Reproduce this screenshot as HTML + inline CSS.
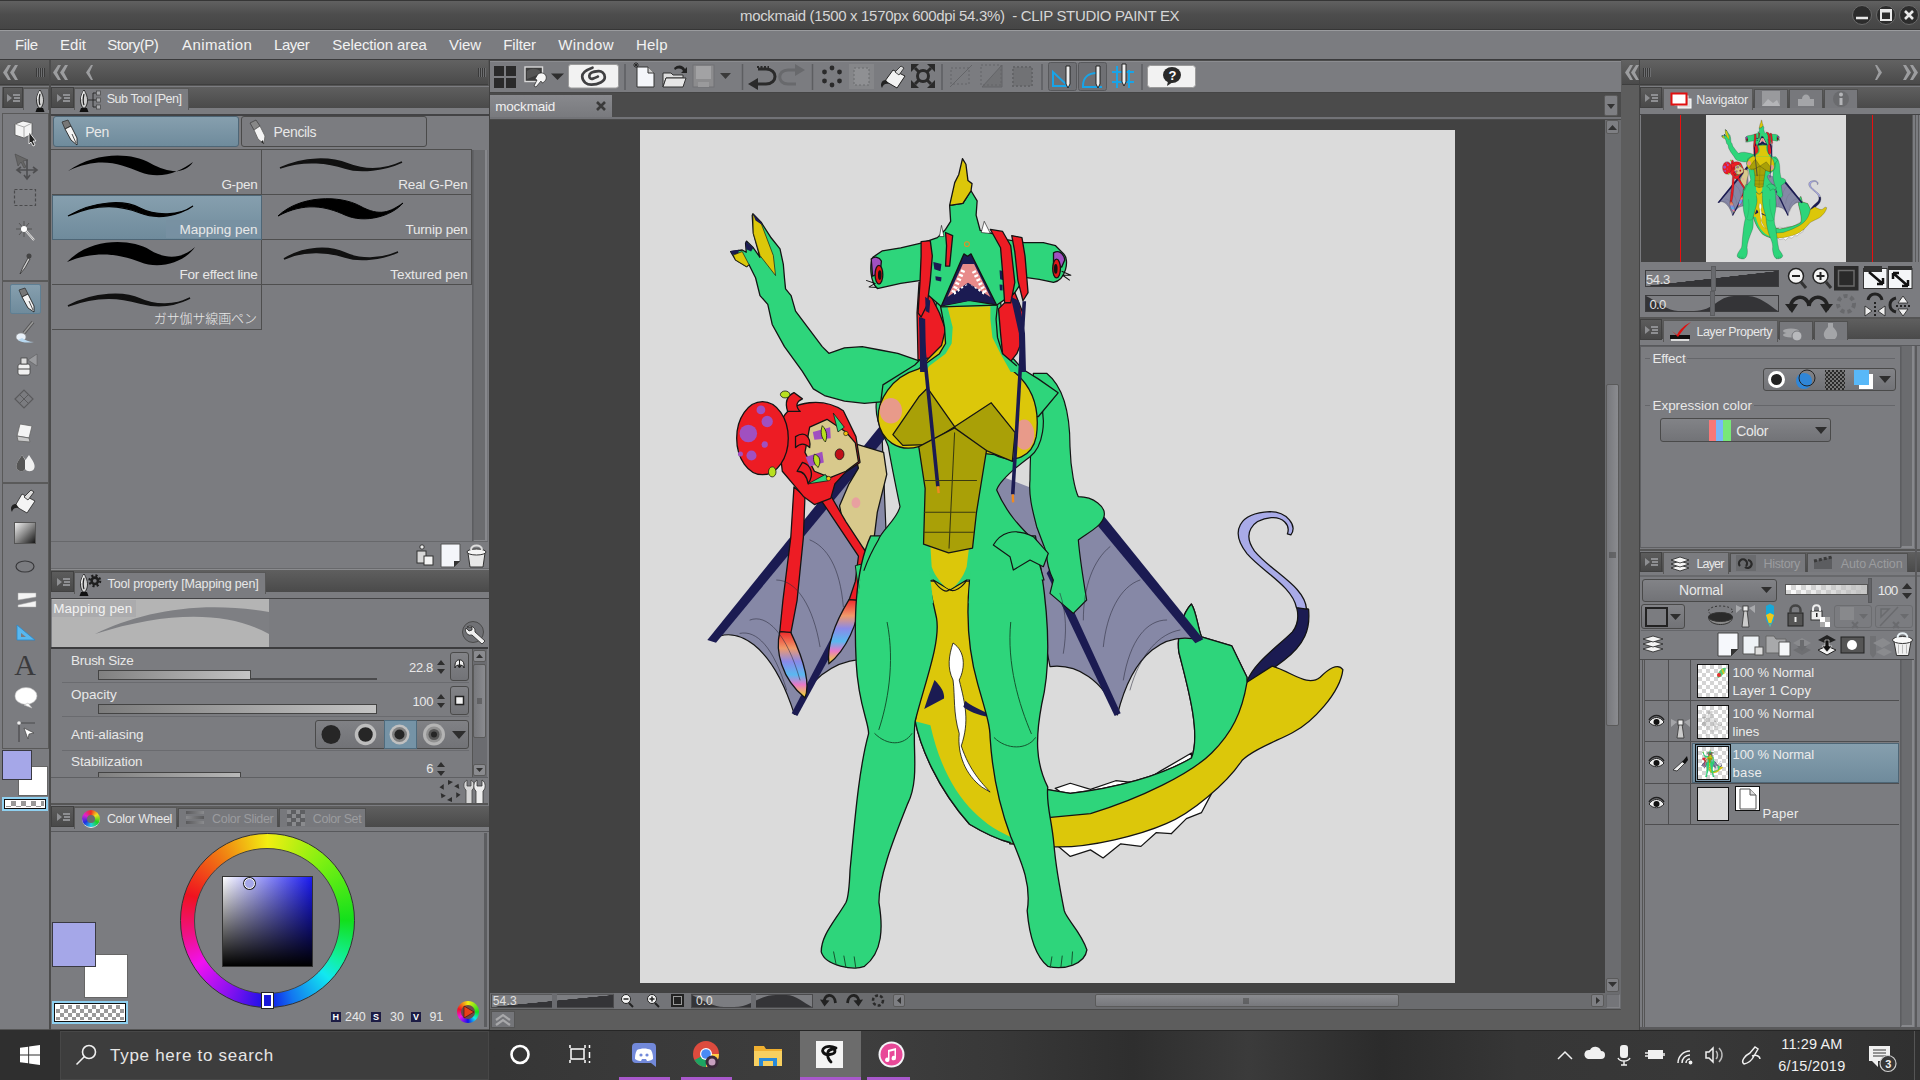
<!DOCTYPE html>
<html lang="en"><head><meta charset="utf-8"><title>mockmaid - CLIP STUDIO PAINT EX</title>
<style>
*{box-sizing:border-box;margin:0;padding:0}
html,body{width:1920px;height:1080px;overflow:hidden;background:#505050;font-family:"Liberation Sans","Noto Sans CJK JP",sans-serif;}
#root{position:relative;width:1920px;height:1080px;overflow:hidden;background:#555555}
.a{position:absolute}
.t{position:absolute;white-space:nowrap;color:#e8e8e8;line-height:1;font-size:13px}
.pan{position:absolute;background:#7b7c80}
.dk{position:absolute;background:linear-gradient(#626262,#4a4a4a)}
.tabbar{position:absolute;background:linear-gradient(#5f5f5f,#4a4a4a)}
.tab{position:absolute;background:#7b7c80;border:1px solid #585858;border-bottom:none}
.tabi{position:absolute;background:#77787c;border:1px solid #505050;border-bottom:none}
.mb{position:absolute;background:linear-gradient(#5c5c5c,#494949);border:1px solid #414141}
svg{position:absolute;overflow:visible}
.cell{position:absolute;border-right:1px solid #4e4e4e;border-bottom:1px solid #4e4e4e}
.sel{background:linear-gradient(#869fae,#6f8b9c)}
.btn{position:absolute;border:1px solid #4a4a4a;border-radius:3px;background:linear-gradient(#828387,#727377)}
</style></head><body><div id="root">
<!-- TITLE BAR -->
<div class="a" style="left:0;top:0;width:1920px;height:30px;background:linear-gradient(#616161,#4c4c4c 50%,#454545);border-top:1px solid #363636;border-bottom:1px solid #363636"></div>
<!-- MENU BAR -->
<div class="a" style="left:0;top:30px;width:1920px;height:30px;background:#7b7c80;border-top:1px solid #9a9b9e;border-bottom:1px solid #3a3a3c"></div>
<style>.m{top:37px;font-size:15px;color:#f0f0f0}</style>
<svg width="0" height="0" style="position:absolute"><defs>
<pattern id="chk" width="4" height="4" patternUnits="userSpaceOnUse"><rect width="2" height="2" fill="#777"/><rect x="2" y="2" width="2" height="2" fill="#777"/></pattern>
<linearGradient id="rb" x1="0" y1="0" x2="0" y2="1"><stop offset="0" stop-color="#ee2a2a"/><stop offset=".25" stop-color="#f09a6a"/><stop offset=".45" stop-color="#8a8ae8"/><stop offset=".65" stop-color="#5ab8f0"/><stop offset=".8" stop-color="#e878c8"/><stop offset="1" stop-color="#f0e020"/></linearGradient>
<g id="art" stroke="#141414" stroke-linejoin="round">
<!-- tail -->
<g transform="translate(1040 440) scale(.5048)" stroke-width="2.500">
<path d="M410 478 C425 440,470 410,500 380 C512 365,512 345,508 330 L532 335 C536 375,524 405,484 436 L444 466 L415 488Z" fill="#1b1b52"/>
<path d="M508 332 C500 290,440 260,410 225 C375 180,395 145,455 142 C490 142,510 170,497 188 L490 186 C497 168,480 152,458 154 C420 158,400 185,425 220 C460 262,525 290,528 335Z" fill="#a9abe8"/>
<path d="M30 690 L60 680 L100 692 L150 675 L200 680 L240 655 L300 620 L300 640 L240 675 L60 710Z" fill="#fff"/>
<path d="M30 800 L60 825 L100 812 L125 828 L160 800 L200 805 L230 778 L260 780 L290 750 L320 738 L340 700 L250 750 L100 790Z" fill="#fff"/>
<path d="M-60 680 L0 690 L60 700 C150 690,240 665,300 630 C320 580,290 480,275 420 C270 380,285 340,300 325 C310 340,312 370,320 390 L380 408 L410 470 L410 480 L460 448 C500 460,530 490,555 470 C570 455,590 440,600 455 C595 500,540 560,500 580 C460 600,420 615,400 635 C370 680,300 740,250 760 C200 782,100 808,30 806 L-60 800Z" fill="#dcc70a"/>
<path d="M-60 680 L0 690 L60 700 C150 690,240 665,300 630 C320 580,290 480,275 420 C270 380,285 340,300 325 C310 340,312 370,320 390 L380 408 L410 470 L410 480 C400 540,380 580,340 620 C300 660,200 710,100 740 L-60 755Z" fill="#2ed57b"/>
</g>
<g transform="translate(640 540) scale(.4119)" stroke-width="3.200">
<path d="M700 100 L800 100 L860 480 L960 600 L960 742 L900 735 C880 730,850 720,800 690 C720 600,680 500,668 440 L700 250Z" fill="#dcc70a"/>
<path d="M668 440 C680 500,720 600,800 690 C850 720,880 730,900 735 L940 738 C880 715,845 695,810 660 C760 610,725 540,705 450Z" fill="#2ed57b" stroke="none"/>
<path d="M668 440 C680 500,720 600,800 690 C850 720,880 730,900 735" fill="none"/>
<path d="M760 250 C790 270,790 310,775 340 C790 400,800 440,780 500 C800 560,830 590,850 612 L830 600 C790 570,770 520,775 470 C760 420,765 380,760 340 C745 310,750 280,760 250Z" fill="#fff" stroke-width="2"/>
<path d="M715 340 C730 355,740 370,738 385 L690 410 L700 380Z" fill="#1b1b52" stroke="none"/>
<path d="M790 390 C800 400,830 415,850 422 L848 430 C820 425,795 415,785 405Z" fill="#1b1b52" stroke="none"/>
</g>
<!-- D group: wings, mermaid -->
<g transform="translate(700 380) scale(.33333)" stroke-width="3.600">
<path d="M545 140 L35 778 C110 735,215 790,283 1003 C320 900,400 845,480 838 L560 500Z" fill="#8688a6"/>
<path d="M548 128 L22 780 L48 788 L566 162Z" fill="#1b1b52" stroke="none"/>
<path d="M500 570 L275 1000 L292 1008 L520 590Z" fill="#1b1b52" stroke="none"/>
<path d="M1100 380 L1190 395 L1500 780 C1400 755,1300 810,1252 1005 C1210 900,1130 850,1050 860 L1000 600Z" fill="#8688a6"/>
<path d="M1197 390 L1510 778 L1486 790 L1174 414Z" fill="#1b1b52" stroke="none"/>
<path d="M1058 555 L1262 1000 L1244 1008 L1040 580Z" fill="#1b1b52" stroke="none"/>
<path d="M880 280 L1010 330 L1040 500 L900 480Z" fill="#8688a6" stroke="none"/>
</g>
<!-- mermaid -->
<g transform="translate(720 380) scale(.31466)" stroke-width="4.100">
<path d="M420 200 L520 230 L530 300 L500 420 L490 500 L480 560 L440 520 L390 450 L380 400 L410 330 L440 280Z" fill="#d8c98c"/>
<path d="M235 340 L225 500 L200 700 L190 800 L225 805 L245 700 L265 500 L270 370Z" fill="#ed1c24"/>
<path d="M190 800 C175 860,195 950,270 1010 C290 960,262 880,225 802Z" fill="url(#rb)"/>
<path d="M320 380 L380 470 L440 560 L430 640 L410 700 L440 702 L472 560 L400 450 L352 368Z" fill="#ed1c24"/>
<path d="M410 698 C360 780,340 850,346 902 C400 860,442 770,442 700Z" fill="url(#rb)"/>
<path d="M430 590 L470 580 L475 650 L440 665Z" fill="#2ed57b" stroke-width="3"/>
<path d="M200 120 C230 65,330 55,392 98 L432 180 L445 262 L400 292 L365 330 L352 376 L300 396 L265 370 L232 330 L198 290 L188 200Z" fill="#ed1c24"/>
<path d="M215 100 C205 70,215 50,235 40 L262 60 C240 70,240 85,255 100Z" fill="#ed1c24"/>
<path d="M285 150 L340 125 L400 165 L430 200 L440 260 L400 290 L350 310 L300 290 L270 230Z" fill="#d8c98c"/>
<path d="M240 180 C270 160,290 180,285 215 C270 200,255 200,240 215Z M262 262 C290 270,300 300,280 330 C275 300,262 290,245 290Z" fill="#ed1c24"/>
<ellipse cx="135" cy="185" rx="82" ry="116" fill="#ed1c24"/>
<g fill="#a050c0" stroke="none"><circle cx="90" cy="170" r="28"/><circle cx="150" cy="132" r="18"/><circle cx="130" cy="95" r="14"/><circle cx="100" cy="240" r="16"/><circle cx="142" cy="205" r="10"/><circle cx="65" cy="235" r="8"/></g>
<path d="M295 165 L350 150 L352 185 L300 190Z M272 245 L325 228 L330 262 L285 275Z" fill="#a050c0" stroke="none"/>
<path d="M325 145 C340 160,342 180,335 197 C322 185,318 165,325 145Z M300 236 C318 240,322 260,312 278 C298 268,294 250,300 236Z" fill="#b8e020" stroke-width="2.500"/>
<ellipse cx="380" cy="236" rx="14" ry="17" fill="#c01018" stroke-width="2.500"/>
<path d="M360 105 L395 150 L375 165Z M280 330 L335 300 L345 320Z" fill="#2ed57b" stroke-width="2.500"/>
<ellipse cx="207" cy="46" rx="15" ry="11" fill="#b8e020" stroke-width="2.500"/><ellipse cx="166" cy="292" rx="12" ry="16" fill="#b8e020" stroke-width="2.500"/>
<circle cx="400" cy="170" r="7" fill="#f0c010" stroke-width="2"/><circle cx="345" cy="313" r="7" fill="#f0c010" stroke-width="2"/>
<ellipse cx="432" cy="390" rx="14" ry="17" fill="#e8a0a0" stroke="none"/>
</g>
<!-- legs -->
<g transform="translate(640 540) scale(.4119)" stroke-width="3.200">
<path d="M560 -10 C520 80,520 200,525 300 C530 400,555 440,555 470 C530 560,520 700,510 800 C508 850,505 870,500 880 C470 930,440 960,440 1000 C450 1035,520 1045,545 1035 C590 1000,590 940,580 880 C580 820,610 740,650 640 C680 580,660 500,668 440 C690 350,730 250,720 190 L700 100 L690 -10Z" fill="#2ed57b"/>
<path d="M800 100 C790 200,800 280,820 350 C840 420,850 450,850 480 C855 560,870 640,900 720 C930 790,950 840,940 900 C945 960,960 1010,990 1035 C1030 1045,1080 1030,1085 995 C1070 950,1035 920,1030 900 C1020 850,1010 800,1005 740 C1000 680,985 640,990 600 C960 540,960 480,975 400 C1000 300,990 180,975 80 L960 -10 L800 -10Z" fill="#2ed57b"/>
</g>
<!-- torso / right arm -->
<g transform="translate(700 380) scale(.33333)" stroke-width="3.600">
<path d="M1040 -20 C1090 20,1110 100,1110 200 C1112 270,1125 330,1135 350 C1180 350,1220 380,1212 410 C1205 440,1160 460,1135 480 C1140 540,1150 600,1160 660 L1120 700 L1050 640 L1060 600 C1045 570,1040 540,1040 520 L1010 440 C1000 400,985 350,990 300 C990 200,1000 100,1000 -20Z" fill="#2ed57b"/>
<path d="M530 60 C520 120,555 170,565 200 C575 260,590 330,600 380 C590 420,545 450,535 480 C500 540,480 600,478 640 L700 600 L750 630 L800 600 L1032 600 C1020 560,1010 520,1000 480 C960 440,920 400,890 330 C900 300,950 260,990 230 C1030 200,1040 120,1020 60Z" fill="#2ed57b"/>
<path d="M484 572 L688 572 L700 670 L472 670Z M812 572 L1022 572 L1032 670 L806 670Z" fill="#2ed57b" stroke="none"/>
<path d="M690 480 L810 480 L800 560 C790 590,770 620,748 628 C730 620,705 590,695 560Z" fill="#dcc70a" stroke="none"/>
<path d="M700 600 C720 630,740 640,748 628 C760 640,790 620,800 600" fill="none"/>
<path d="M880 495 C900 460,940 440,1000 470 L1045 520 L1030 560 L990 540 L940 570 L930 530Z" fill="#2ed57b"/>
</g>
<!-- upper body -->
<g transform="translate(640 130) scale(.39823)" stroke-width="3.200">
</g>
<g transform="translate(720 200) scale(.22222)" stroke-width="5.850">
<path d="M148 62 L185 100 L230 170 L270 220 L285 290 L290 350 L295 400 L320 430 L340 500 L400 580 L460 660 L490 690 L560 665 L640 660 L720 675 L800 690 L900 725 L900 800 L760 905 L650 915 L560 905 L470 880 L420 850 L370 770 L290 660 L235 560 L215 470 L180 430 L160 350 L130 290 L120 300 L70 270 L48 232 L100 225 L118 235 L115 195 L120 185 L150 215 L180 258 L150 150 L145 70Z" fill="#2ed57b"/>
<path d="M148 65 L185 105 L240 250 L250 340 L180 250 L150 150Z" fill="#dcc70a" stroke-width="3"/>
<path d="M148 62 L185 100 L190 112 L160 92Z M48 230 L85 224 L82 245 L56 246Z M115 186 L150 215 L140 232 L118 222Z" fill="#1b1b52" stroke="none"/>
<path d="M60 248 L100 232 L130 290 L120 300 L70 270Z" fill="#dcc70a" stroke-width="3"/>
</g>
<g transform="translate(640 130) scale(.39823)" stroke-width="3.200">
<path d="M745 430 L905 430 L925 560 L960 600 L1000 625 L1050 660 L1000 720 L600 720 L610 640 L690 590 L720 560Z" fill="#2ed57b"/>
<path d="M770 440 L882 440 C890 500,900 560,930 600 C985 640,1005 700,995 770 C985 820,940 840,890 815 L700 795 C650 810,605 780,598 730 C595 680,630 620,700 600 C740 570,760 500,770 440Z" fill="#dcc70a"/>
<ellipse cx="630" cy="705" rx="28" ry="32" fill="#e89a8a" stroke="none"/><ellipse cx="965" cy="765" rx="25" ry="38" fill="#e89a8a" stroke="none"/>
<path d="M635 765 L700 670 L722 648 L790 745 L720 790 L660 792Z" fill="#a9a007"/>
<path d="M790 745 L882 685 L942 760 L935 832 L870 805 L800 772Z" fill="#a9a007"/>
<path d="M700 795 L790 748 L870 805 L845 960 L835 1050 L775 1062 L712 1040 L716 900Z" fill="#a9a007"/>
</g>
<g transform="translate(860 150) scale(.2037)" stroke-width="6.400">
<path d="M290 650 L350 720 L390 800 L420 880 L400 960 L340 1020 L285 1030 L280 800Z" fill="#ed1c24"/>
<path d="M680 780 L760 700 L800 800 L790 950 L770 1000 L730 1050 L700 1000 L690 900Z" fill="#ed1c24"/>
<path d="M395 765 L415 870 L420 950 L390 1000 L300 1065 L300 1090 L770 1090 L770 1060 L700 1000 L675 920 L668 830 L675 762Z" fill="#2ed57b" stroke="none"/>
<path d="M430 772 L640 767 L640 830 L650 920 L690 1000 L740 1090 L320 1090 L340 1060 L420 1000 L450 950 L455 870Z" fill="#dcc70a" stroke="none"/>
<path d="M395 765 L415 870 L420 950 L390 1000 L300 1065 M675 762 L668 830 L675 920 L700 1000 L770 1060" fill="none"/>
<path d="M310 455 L200 480 L110 495 L65 525 C45 560,50 650,85 680 L200 655 L300 640 L320 700 L400 770 L670 762 L760 700 L810 625 L880 635 L950 650 C1010 640,1030 540,1000 510 L960 470 L900 455 L805 455 L720 440 L650 410 L590 395 L570 320 L575 250 L545 200 L505 262 L440 272 L445 350 L420 390 L380 430Z" fill="#2ed57b"/>
<path d="M503 42 L520 70 L530 150 L550 165 L545 200 L505 262 L440 272 L465 160 L485 120Z" fill="#dcc70a"/>
<path d="M400 370 L390 425 L412 425Z M610 350 L595 405 L640 410Z" fill="#fff" stroke-width="3"/>
<path d="M55 535 C70 520,95 525,105 545 L100 600 L62 620Z" fill="#a050c0"/>
<ellipse cx="93" cy="612" rx="19" ry="46" fill="#e01818"/><ellipse cx="97" cy="614" rx="9" ry="24" fill="#111" stroke="none"/>
<path d="M30 640 L75 655 L45 672 L85 675" fill="none" stroke="#111" stroke-width="5"/>
<path d="M950 505 C975 490,1000 505,1005 540 L990 575 L950 560Z" fill="#a050c0"/>
<ellipse cx="965" cy="582" rx="19" ry="46" fill="#e01818"/><ellipse cx="961" cy="584" rx="9" ry="24" fill="#111" stroke="none"/>
<path d="M990 595 L1035 615 L995 615 L1030 640" fill="none" stroke="#111" stroke-width="5"/>
<path d="M360 550 L400 560 L395 595 L365 585Z M370 620 L400 625 L398 645 L372 640Z M685 590 L705 595 L705 640 L688 635Z M685 660 L700 662 L700 690 L687 688Z" fill="#1b1b52" stroke="none"/>
<path d="M510 510 L528 522 L545 510 L670 760 L535 738 L400 765Z" fill="#1b1b52"/>
<path d="M505 560 L430 722 L530 652 L640 722 L560 560Z" fill="#e88a8a" stroke="none"/>
<path d="M507 590 L455 705 L530 668 L616 705 L556 590" fill="none" stroke="#fff" stroke-width="20" stroke-dasharray="11 11"/>
<path d="M520 665 L540 660 L660 750 L535 740 L400 765Z" fill="#1b1b52" stroke="none"/>
<path d="M300 450 L345 445 L355 520 L345 640 L330 760 L300 820 L285 800 L295 640 L300 520Z" fill="#ed1c24"/>
<path d="M420 405 L455 420 L440 570 L420 570 L425 470Z" fill="#ed1c24"/>
<path d="M640 390 L700 400 L740 470 L760 650 L740 750 L710 750 L700 600 L690 480Z" fill="#ed1c24"/>
<path d="M745 420 L795 430 L810 520 L825 700 L800 740 L775 640 L760 500Z" fill="#ed1c24"/>
<path d="M290 820 L320 830 L325 1090 L295 1090Z M320 720 L345 740 L340 800 L322 790Z M740 720 L780 740 L810 900 L815 1090 L785 1090 L780 900Z" fill="#1b1b52" stroke="none"/>
<circle cx="525" cy="462" r="12" fill="none" stroke="#f08a20" stroke-width="5"/>
</g>
<g transform="translate(640 130) scale(.39823)" stroke-width="3.200">
<path d="M705 472 L748 895" stroke="#1b1b52" stroke-width="9" fill="none"/>
<path d="M965 430 L936 915" stroke="#1b1b52" stroke-width="9" fill="none"/>
<path d="M748 895 L750 912 M936 915 L937 935" stroke="#f08a20" stroke-width="6" fill="none"/>
</g>
<g fill="none" stroke="#2a2a3a" stroke-linecap="round">
<g transform="translate(700 380) scale(.33333)" stroke-width="2.200" opacity=".75">
<path d="M150 720 C200 700,260 760,300 900 M230 600 C290 600,340 680,360 800 M330 480 C380 500,420 560,430 680 M120 760 C170 750,220 800,260 930"/>
<path d="M1400 720 C1340 720,1290 780,1270 900 M1320 600 C1260 620,1220 700,1210 800 M1230 500 C1180 540,1150 620,1150 720 M1440 750 C1380 760,1320 820,1290 930 M1080 640 C1100 700,1100 760,1090 820"/>
</g>
<g transform="translate(640 130) scale(.39823)" stroke-width="2.600" stroke="#3a3a10">
<path d="M790 760 L776 1050 M716 880 L845 880 M714 960 L842 960 M713 1010 L838 1010"/>
</g>
<g transform="translate(640 540) scale(.4119)" stroke-width="2.400" stroke="#14532e">
<path d="M570 470 C600 500,640 500,660 470 M860 480 C890 510,940 510,960 480 M470 1000 L476 1030 M495 1010 L500 1038 M520 1012 L524 1040 M1000 1012 L996 1038 M1025 1010 L1022 1036 M1050 1000 L1048 1030 M600 200 C620 300,600 400,580 460 M900 200 C890 300,920 400,950 470"/>
</g>
</g>
</g>
<g id="mbi" fill="#8e8f92"><path d="M0 0l5 4-5 4z"/><rect x="6" y="0" width="7" height="2"/><rect x="7" y="3" width="6" height="2"/><rect x="6" y="6" width="7" height="2"/></g>
</defs></svg>
<!-- LEFT TOOL COLUMN -->
<div class="dk" style="left:0;top:60px;width:49px;height:25px;border-bottom:1px solid #3e3e3e"></div>
<div class="pan" style="left:0;top:86px;width:49px;height:943px"></div>
<div class="tabbar" style="left:2px;top:87px;width:47px;height:21px"></div>
<div class="mb" style="left:3px;top:87px;width:20px;height:21px"></div>
<div class="tab" style="left:23px;top:88px;width:26px;height:22px"></div>
<div class="a" style="left:2px;top:113px;width:47px;height:636px;border:1px solid #595959;background:#7b7c80"></div>
<div class="a" style="left:2px;top:280px;width:47px;height:2px;background:#5a5a5a"></div>
<div class="a" style="left:2px;top:482px;width:47px;height:2px;background:#5a5a5a"></div>
<div class="a sel" style="left:10px;top:284px;width:31px;height:30px;border:1px solid #5f7f93;border-radius:2px"></div>
<div class="a" style="left:49px;top:60px;width:2px;height:970px;background:#4c4c4c"></div>
<!-- color swatches in tool column -->
<div class="a" style="left:18px;top:766px;width:30px;height:30px;background:#fff;border:1px solid #666"></div>
<div class="a" style="left:2px;top:750px;width:30px;height:30px;background:#a5a7e8;border:1px solid #3a3a42"></div>
<div class="a" style="left:2px;top:797px;width:46px;height:14px;background:#8fd0f0"></div>
<div class="a" style="left:4px;top:799px;width:42px;height:10px;background:#fff;border:1px solid #111"></div>
<div class="a" style="left:6px;top:801px;width:38px;height:6px;background:repeating-conic-gradient(#999 0 25%,#fff 0 50%) 0 0/10px 10px"></div>

<!-- SUB TOOL DOCK -->
<div class="dk" style="left:51px;top:60px;width:437px;height:25px;border-bottom:1px solid #3e3e3e"></div>
<div class="pan" style="left:51px;top:86px;width:438px;height:943px"></div>
<div class="tabbar" style="left:51px;top:87px;width:438px;height:21px"></div>
<div class="mb" style="left:51px;top:87px;width:23px;height:21px"></div>
<div class="tab" style="left:74px;top:88px;width:115px;height:22px"></div>
<div class="a" style="left:51px;top:114px;width:438px;height:1.500px;background:#434345"></div>
<!-- pen/pencil group buttons -->
<div class="a sel" style="left:53px;top:116px;width:186px;height:31px;border:1px solid #4e6676;border-radius:3px"></div>
<div class="btn" style="left:241px;top:116px;width:186px;height:31px;background:#7b7c80"></div>
<!-- brush grid -->
<div class="a" style="left:51px;top:149px;width:421px;height:1px;background:#4e4e4e"></div>
<div class="cell" style="left:52px;top:150px;width:210px;height:45px"></div>
<div class="cell" style="left:262px;top:150px;width:210px;height:45px"></div>
<div class="cell sel" style="left:52px;top:195px;width:210px;height:45px;border:1px solid #4e6676"></div>
<div class="cell" style="left:262px;top:195px;width:210px;height:45px"></div>
<div class="cell" style="left:52px;top:240px;width:210px;height:45px"></div>
<div class="cell" style="left:262px;top:240px;width:210px;height:45px"></div>
<div class="cell" style="left:52px;top:285px;width:210px;height:45px"></div>
<div class="a" style="left:166px;top:220px;width:95px;height:18px;background:rgba(120,145,162,.85)"></div>
<style>.bl{font-size:13.5px;color:#ececec}</style>
<!-- brush strokes -->
<svg style="left:52px;top:150px" width="420" height="180" viewBox="52 150 420 180">
<path d="M68 171 C95 152,130 152,150 163 S185 174,193 162 C180 172,160 180,140 172 S100 156,68 171Z" fill="#000"/>
<path d="M68 216 C95 200,125 200,140 208 S180 216,193 206 C178 216,158 220,140 213 S100 202,68 216Z" fill="#000" stroke="#000" stroke-width="1.200"/>
<path d="M67 262 C90 238,130 238,150 250 S185 256,195 247 C185 262,160 270,140 262 S95 250,67 262Z" fill="#000"/>
<path d="M68 306 C95 292,125 292,140 299 S175 306,190 298 C176 305,158 308,140 303 S100 294,68 306Z" fill="#111" stroke="#111" stroke-width="1.600"/>
<path d="M280 168 C305 157,330 157,348 164 S385 170,402 162 C385 170,360 173,345 168 S305 159,280 168Z" fill="#111" stroke="#111" stroke-width="1.600"/>
<path d="M278 216 C300 195,340 195,360 206 S390 212,403 203 C392 216,365 224,345 215 S305 202,278 216Z" fill="#000" stroke="#000" stroke-width="1"/>
<path d="M284 259 C305 246,330 246,345 253 S380 260,398 252 C382 259,360 262,345 257 S305 249,284 259Z" fill="#111" stroke="#111" stroke-width="1.600"/>
</svg>
<!-- scrollbar of sub tool list -->
<div class="a" style="left:472px;top:150px;width:16px;height:392px;background:#747579;border-left:1px solid #5c5d60"></div>
<div class="a" style="left:473px;top:150px;width:14px;height:392px;background:#6b6c6f;border-right:2px solid #87888c;border-bottom:2px solid #87888c;border-left:1px solid #626366"></div>
<div class="a" style="left:51px;top:541px;width:437px;height:1px;background:#67686b"></div>
<!-- bottom icons of sub tool -->
<svg style="left:414px;top:542.500px" width="74" height="26" viewBox="414 544 74 26">
<rect x="417" y="552" width="9" height="12" fill="#d8d8d8" stroke="#333" stroke-width="1"/><rect x="424" y="557" width="9" height="9" fill="#f4f4f4" stroke="#333" stroke-width="1"/><circle cx="422" cy="548" r="2.2" fill="#eee" stroke="#333"/>
<path d="M441 545h19v17l-6 6h-13z" fill="#f4f6fa" stroke="#555" stroke-width="1"/><path d="M454 568v-6h6z" fill="#333"/>
<path d="M468 554h17l-2 14h-13z" fill="#e8e8e8" stroke="#333" stroke-width="1"/><ellipse cx="476.500" cy="553" rx="9.500" ry="3" fill="#f5f5f5" stroke="#333"/><path d="M471 551c0-6,11-6,11 0" fill="none" stroke="#ddd" stroke-width="2"/>
</svg>
<!-- TOOL PROPERTY -->
<div class="a" style="left:51px;top:568px;width:438px;height:1px;background:#68696c"></div><div class="a" style="left:51px;top:569px;width:438px;height:1px;background:#8a8b8e"></div>
<div class="tabbar" style="left:51px;top:570px;width:438px;height:22px"></div>
<div class="mb" style="left:51px;top:570.500px;width:23px;height:21px"></div>
<div class="tab" style="left:74px;top:572px;width:192px;height:22px"></div>
<div class="a" style="left:51px;top:598px;width:438px;height:1px;background:#434345"></div>
<div class="a" style="left:52px;top:599px;width:217px;height:48px;background:#b4b4b4"></div>
<svg style="left:52px;top:599px" width="217" height="48" viewBox="52 599 217 48"><path d="M95 634 C140 612,200 600,269 612 L269 634 C230 612,170 610,95 634Z" fill="#7e7f83"/></svg>
<div class="a" style="left:52px;top:600px;width:84px;height:17px;background:rgba(170,170,172,.9)"></div>
<div class="a" style="left:51px;top:647px;width:437px;height:2px;background:#3c3c3e"></div>
<!-- rows -->
<div class="a" style="left:62px;top:682px;width:407px;height:1px;background:#6a6b6f"></div>
<div class="a" style="left:62px;top:716px;width:407px;height:1px;background:#6a6b6f"></div>
<div class="a" style="left:62px;top:750px;width:407px;height:1px;background:#6a6b6f"></div>
<div class="a" style="left:98px;top:678px;width:279px;height:2px;background:#4a4a4c"></div>
<div class="a" style="left:98px;top:670px;width:153px;height:10px;background:linear-gradient(90deg,#808080,#c4c4c4);border:1px solid #444"></div>
<div class="a" style="left:98px;top:704px;width:279px;height:10px;background:linear-gradient(90deg,#7c7c7c,#c4c4c4);border:1px solid #444"></div>
<div class="a" style="left:98px;top:772px;width:143px;height:6px;background:linear-gradient(90deg,#808080,#b8b8b8);border:1px solid #444;border-bottom:none"></div>
<svg style="left:436px;top:650px" width="12" height="128" viewBox="436 650 12 128" fill="#2e2e2e">
<path d="M437 665l4-5 4 5zM437 669l4 5 4-5z"/><path d="M437 699l4-5 4 5zM437 703l4 5 4-5z"/><path d="M437 767l4-5 4 5zM437 771l4 5 4-5z"/></svg>
<div class="btn" style="left:450px;top:652px;width:19px;height:29px"></div>
<div class="btn" style="left:450px;top:686px;width:19px;height:29px"></div>
<svg style="left:450px;top:652px" width="19" height="64" viewBox="450 652 19 64"><path d="M455 668c0-4,9-4,9 0v-3c0-7-9-7-9 0z" fill="#eee" stroke="#222" stroke-width="1"/><path d="M459.500 660v7m-2-2l2 3 2-3" stroke="#222" fill="none"/><rect x="455.500" y="696.500" width="8" height="8" fill="#f2f2f2" stroke="#222" stroke-width="1.500"/></svg>
<!-- anti-alias group -->
<div class="btn" style="left:315px;top:720px;width:154px;height:29px;background:linear-gradient(#808185,#727377)"></div>
<div class="a" style="left:384px;top:720px;width:33px;height:29px;background:#7593a6;border:1px solid #4f6b7d"></div>
<svg style="left:315px;top:720px" width="154" height="29" viewBox="315 720 154 29">
<circle cx="331" cy="734.500" r="9.500" fill="#262626"/>
<circle cx="365.500" cy="734.500" r="9" fill="#262626" stroke="#bdbdbd" stroke-width="3.500"/>
<circle cx="399.500" cy="734.500" r="10" fill="#c0c0c0"/><circle cx="399.500" cy="734.500" r="7.500" fill="#808080"/><circle cx="399.500" cy="734.500" r="5" fill="#262626"/>
<circle cx="434" cy="734.500" r="11" fill="#b4b4b4"/><circle cx="434" cy="734.500" r="8" fill="#909090"/><circle cx="434" cy="734.500" r="5.500" fill="#555"/><circle cx="434" cy="734.500" r="3" fill="#262626"/>
<path d="M452 731h14l-7 8z" fill="#2e2e2e"/></svg>
<!-- scrollbar -->
<div class="a" style="left:472px;top:649px;width:15px;height:129px;background:#6b6c70;border-left:1px solid #555"></div>
<div class="a" style="left:473px;top:650px;width:13px;height:12px;background:#8a8b8f;border:1px solid #5a5a5a;border-radius:2px"></div>
<div class="a" style="left:473px;top:764px;width:13px;height:12px;background:#8a8b8f;border:1px solid #5a5a5a;border-radius:2px"></div>
<div class="a" style="left:473px;top:664px;width:13px;height:74px;background:linear-gradient(90deg,#77787c,#8a8b8f);border:1px solid #5a5a5a;border-radius:2px"></div>
<svg style="left:473px;top:650px" width="13" height="128" viewBox="473 650 13 128" fill="#333"><path d="M476 658l3.500-4 3.500 4zM476 768l3.500 4 3.500-4z"/><path d="M477 699h5m-5 2h5m-5 2h5" stroke="#444" fill="none"/></svg>
<div class="a" style="left:51px;top:777px;width:437px;height:1px;background:#5f6063"></div>
<svg style="left:436px;top:778px" width="52" height="26" viewBox="436 778 52 26">
<g fill="#2e2e2e" transform="translate(450 791)"><path d="M-2-11l5 2-5 3z"/><path d="M-2-11l5 2-5 3z" transform="rotate(60)"/><path d="M-2-11l5 2-5 3z" transform="rotate(120)"/><path d="M-2-11l5 2-5 3z" transform="rotate(180)"/><path d="M-2-11l5 2-5 3z" transform="rotate(240)"/><path d="M-2-11l5 2-5 3z" transform="rotate(300)"/></g>
<path d="M466 804v-14c-3-2-3-8 1-10v6h4v-6c4 2 4 8 1 10v14z" fill="#d6d6d6" stroke="#444" stroke-width=".8"/>
<path d="M476 804v-13c-3-2-3-9 1-11v6h5v-6c4 2 4 9 1 11v13z" fill="#eee" stroke="#333" stroke-width=".8"/></svg>
<div class="a" style="left:51px;top:803px;width:437px;height:2px;background:#555"></div>
<!-- wrench search icon in preview -->
<svg style="left:460px;top:620px" width="28" height="28" viewBox="460 620 28 28"><circle cx="473" cy="632" r="10.500" fill="#707175" stroke="#4a4a4a"/><path d="M467 627a5 5 0 0 1 8 5l10 9-3 3-10-9a5 5 0 0 1-6-7l3 3 3-1 0-3z" fill="#f0f0f0" stroke="#222" stroke-width=".8"/></svg>

<!-- COLOR WHEEL PANEL -->
<div class="tabbar" style="left:51px;top:806px;width:438px;height:21px"></div>
<div class="mb" style="left:51px;top:806px;width:23px;height:21px"></div>
<div class="tab" style="left:74px;top:807px;width:103px;height:22px"></div>
<div class="tabi" style="left:178px;top:808px;width:100px;height:19px"></div>
<div class="tabi" style="left:279px;top:808px;width:87px;height:19px"></div>
<div class="a" style="left:51px;top:831px;width:438px;height:1px;background:#58595c"></div>
<div class="a" style="left:180px;top:833px;width:175px;height:175px;border-radius:50%;background:conic-gradient(from 0deg,#f2ee12,#7cf012 12%,#12e01c 25%,#12f0a0 33%,#12e8f0 37%,#1278f0 45%,#1212e8 50%,#8a12f0 58%,#f012f0 66%,#f0128a 72%,#f01220 80%,#f07a12 90%,#f2ee12);border:1px solid #333"></div>
<div class="a" style="left:194px;top:848px;width:146px;height:146px;border-radius:50%;background:#7b7c80;border:1px solid #444"></div>
<div class="a" style="left:222px;top:876px;width:91px;height:91px;background:linear-gradient(to top,#000,rgba(0,0,0,0)),linear-gradient(to right,#fff,#1a1af0);border:1px solid #333"></div>
<div class="a" style="left:244px;top:878px;width:11px;height:11px;border-radius:50%;background:#a5a7e8;border:1.500px solid #fff;box-shadow:0 0 0 1px #222"></div>
<div class="a" style="left:262px;top:993px;width:11px;height:15px;background:#1a1ad8;border:2px solid #fff;box-shadow:0 0 0 1px #222"></div>
<div class="a" style="left:84px;top:954px;width:44px;height:44px;background:#fff;border:1px solid #666"></div>
<div class="a" style="left:52px;top:922px;width:44px;height:45px;background:#a5a7e8;border:1px solid #3a3a42"></div>
<div class="a" style="left:52px;top:1001px;width:76px;height:23px;background:#8fd0f0"></div>
<div class="a" style="left:54px;top:1003px;width:72px;height:19px;background:#fff;border:1px solid #111"></div>
<div class="a" style="left:56px;top:1005px;width:68px;height:15px;background:repeating-conic-gradient(#9a9a9a 0 25%,#fff 0 50%) 0 0/8px 8px"></div>
<div class="a" style="left:331px;top:1012px;width:10px;height:10px;background:#1c1c44"></div>
<div class="a" style="left:371px;top:1012px;width:10px;height:10px;background:#1c1c44"></div>
<div class="a" style="left:411px;top:1012px;width:10px;height:10px;background:#1c1c44"></div>
<div class="a" style="left:457px;top:1001px;width:22px;height:22px;border-radius:50%;background:conic-gradient(#f2ee12,#12e01c 25%,#12e8f0 37%,#1212e8 50%,#f012f0 66%,#f01220 80%,#f2ee12)"></div>
<div class="a" style="left:461px;top:1005px;width:14px;height:14px;border-radius:50%;background:#6a4a4a"></div>
<svg style="left:457px;top:1001px" width="22" height="22" viewBox="0 0 22 22"><path d="M7 5l10 6-10 6z" fill="#e8401a" stroke="#400" stroke-width=".6"/></svg>
<div class="a" style="left:484px;top:833px;width:3px;height:194px;background:#5c5d60"></div>
<div class="a" style="left:489px;top:60px;width:1px;height:970px;background:#424242"></div>
<!-- CANVAS AREA -->
<div class="a" style="left:490px;top:60px;width:1131px;height:970px;background:#4b4b4b"></div>
<div class="a" style="left:490px;top:61px;width:1131px;height:32px;background:#7b7c80;border-top:1px solid #8b8c90;border-bottom:1px solid #454545"></div>
<!-- command bar icons -->
<svg style="left:490px;top:61px" width="1131" height="32" viewBox="490 61 1131 32">
<g fill="#2a2a2a"><rect x="494" y="66" width="10" height="10"/><rect x="506" y="66" width="10" height="10"/><rect x="494" y="78" width="10" height="10"/><rect x="506" y="78" width="10" height="10"/></g>
<rect x="525" y="67" width="17.500" height="14.500" fill="#3c3c3c" stroke="#d8d8d8" stroke-width="1.400"/><path d="M527 79v-8c4-3 9-3 13 0v3" fill="#555" stroke="none"/>
<path d="M538 74c3-2 7-1 8 2 1 3-1 6-4 7l-1-2-5 6-2-1 3-6-2-1z" fill="#f6f6f6" stroke="#222" stroke-width=".7"/>
<path d="M551 73.500h13l-6.500 6.500z" fill="#2e2e2e"/>
<rect x="568.500" y="64.500" width="50" height="23.500" rx="2.500" fill="#f2f2f2" stroke="#9a9a9a"/>
<path d="M592.500 67.700C586 70,582 73,582.200 76.500C582.500 82,587 84.800,591.600 84.600C598 84.500,605 81.500,604.800 77C604.600 73,601.500 71,598.500 71.200C594 71.500,589.500 73,589.300 75.800C589.200 78.500,591 79.200,593 78.600C595 78,597 77,597.900 76.600" fill="none" stroke="#404042" stroke-width="2.700" stroke-linecap="round"/>
<path d="M625 64v26M742.500 64v26M812.500 64v26M942 64v26M1042 64v26M1142 64v26" stroke="#5d5e61" stroke-width="1.500"/>
<path d="M637 67h11l6 6v14h-17z" fill="#f4f6fa" stroke="#333" stroke-width="1"/><path d="M648 67v6h6" fill="#ccc" stroke="#333"/><path d="M636 62v6m-3-3h6m-5-2l4 4m0-4l-4 4" stroke="#222" stroke-width=".8"/>
<path d="M663 73h8l2 2h10v3h-17l-3 9z" fill="#ddd" stroke="#333"/><path d="M666 78h20l-3 9h-20z" fill="#e6e6e6" stroke="#333"/><path d="M674 68c4-4 9-3 11 1l2-2v6h-6l2-2c-2-3-5-3-8-1z" fill="#222"/>
<rect x="693" y="65" width="21" height="22" fill="#8c8c8e" stroke="#707174"/><rect x="696" y="66" width="15" height="13" fill="#a2a2a4"/><rect x="698" y="82" width="11" height="5" fill="#9a9a9c"/>
<path d="M720 73h11l-5.500 6z" fill="#3a3a3a"/>
<path d="M758 69h8c12 0 12 15 0 15h-8" fill="none" stroke="#2a2a2a" stroke-width="3"/><path d="M748 84l10-6v12z" fill="#2a2a2a"/><path d="M757 67h12" stroke="#2a2a2a" stroke-width="2" stroke-dasharray="2 1.500"/>
<path d="M796 70h-8c-11 0-11 14 0 14h8" fill="none" stroke="#68696c" stroke-width="3"/><path d="M805 70l-10-6v12z" fill="#68696c"/>
<g fill="#2a2a2a"><circle cx="832" cy="68" r="2.400"/><circle cx="832" cy="85" r="2.400"/><circle cx="824.500" cy="72" r="2.400"/><circle cx="839.500" cy="72" r="2.400"/><circle cx="824.500" cy="81" r="2.400"/><circle cx="839.500" cy="81" r="2.400"/></g>
<rect x="849" y="64" width="25" height="25" fill="#858689"/><rect x="854" y="68" width="15" height="17" fill="#8f9093" stroke="#6b6c6f" stroke-dasharray="2 2"/>
<path d="M893 70l12 6-8 12-12-7z" fill="#f2f2f2" stroke="#222"/><path d="M886 80c-5 0-6 5-4 8 1-4 4-5 7-4z" fill="#222"/><path d="M895 72l6-6 3 2-5 7z" fill="#ddd" stroke="#222" stroke-width=".8"/>
<g stroke="#2a2a2a" stroke-width="3" fill="none"><path d="M915 68l16 16M931 68l-16 16"/><circle cx="923" cy="76" r="5.500" fill="#7b7c80"/></g><g fill="#2a2a2a"><path d="M911 64h8l-8 8zM935 64v8l-8-8zM911 88v-8l8 8zM935 88h-8l8-8z"/></g>
<g stroke="#646568" fill="none"><rect x="951" y="68" width="18" height="16" stroke-dasharray="2 2"/><path d="M950 87l22-22"/><path d="M982 87l20-22v22z" fill="#717275"/><rect x="981" y="65" width="20" height="20" stroke-dasharray="2 2"/><rect x="1013" y="67" width="19" height="19" fill="#717275" stroke-dasharray="2 2" stroke-width="2"/></g>
<rect x="1048.500" y="62.500" width="28" height="28" rx="2" fill="#6f7074" stroke="#58595c"/><rect x="1078.500" y="62.500" width="28" height="28" rx="2" fill="#6f7074" stroke="#58595c"/>
<path d="M1053 86v-14l15 14z" fill="none" stroke="#18a4e8" stroke-width="2"/><path d="M1066 66h4v18l-2 4-2-4z" fill="#eee" stroke="#222"/>
<path d="M1083 86c0-8 5-13 14-13" fill="none" stroke="#18a4e8" stroke-width="2"/><path d="M1082 87h20" stroke="#18a4e8" stroke-width="2"/><path d="M1096 66h4v18l-2 4-2-4z" fill="#eee" stroke="#222"/>
<path d="M1112 72h22M1112 82h22M1117 66v22M1129 70v18" stroke="#18a4e8" stroke-width="2"/><path d="M1122 64h4v18l-2 4-2-4z" fill="#eee" stroke="#222"/>
<rect x="1147.500" y="65.500" width="48" height="22" rx="3" fill="#f2f2f2" stroke="#9a9a9a"/>
<ellipse cx="1172" cy="75" rx="9" ry="8" fill="#2a2a2a"/><path d="M1168 81l-1 5 6-4z" fill="#2a2a2a"/>
</svg>
<!-- doc tab row -->
<div class="a" style="left:490px;top:94px;width:1131px;height:24px;background:#4b4b4b"></div>
<div class="a" style="left:490px;top:95px;width:122px;height:23px;background:linear-gradient(#88898d,#78797d)"></div>
<svg style="left:595px;top:100px" width="12" height="12" viewBox="0 0 12 12"><path d="M2 2l8 8M10 2l-8 8" stroke="#3a3a3a" stroke-width="2.600"/></svg>
<div class="a" style="left:490px;top:117px;width:1131px;height:2px;background:#727377"></div>
<div class="a" style="left:1604px;top:95px;width:14px;height:21px;background:#7e7f83;border:1px solid #5a5a5a;border-radius:2px"></div>
<svg style="left:1604px;top:95px" width="14" height="21" viewBox="0 0 14 21"><path d="M3 9h8l-4 5z" fill="#333"/></svg>
<!-- viewport -->
<div class="a" style="left:490px;top:120px;width:1115px;height:873px;background:#424242"></div>
<div class="a" id="paper" style="left:640px;top:130px;width:815px;height:853px;background:#dbdbdb;overflow:hidden">
<svg style="left:0;top:0" width="815" height="853" viewBox="640 130 815 853"><use href="#art"/></svg>
</div>
<!-- v scrollbar -->
<div class="a" style="left:1605px;top:120px;width:16px;height:889px;background:#6b6c6f"></div>
<div class="a" style="left:1606px;top:120px;width:13px;height:14px;background:#7e7f83;border:1px solid #5a5a5a;border-radius:2px"></div>
<div class="a" style="left:1606px;top:978px;width:13px;height:14px;background:#7e7f83;border:1px solid #5a5a5a;border-radius:2px"></div>
<div class="a" style="left:1606px;top:384px;width:13px;height:342px;background:linear-gradient(90deg,#77787c,#8a8b8f);border:1px solid #5a5a5a;border-radius:2px"></div>
<svg style="left:1605px;top:120px" width="16" height="873" viewBox="1605 120 16 873" fill="#333"><path d="M1608 130l4.500-5 4.500 5zM1608 982l4.500 5 4.500-5z"/><path d="M1609 553h7m-7 2h7m-7 2h7" stroke="#444" fill="none"/></svg>
<!-- bottom status bar -->
<div class="a" style="left:490px;top:993px;width:1115px;height:16px;background:#6b6c6f"></div>
<div class="a" style="left:491px;top:994px;width:123px;height:14px;background:linear-gradient(to bottom right,#7c7d81 49.500%,#343437 50.500%);border:1px solid #4a4a4c;border-top-color:#58585a"></div>
<div class="a" style="left:552px;top:993px;width:5px;height:16px;background:#6b6c70"></div>
<div class="a" style="left:614px;top:993px;width:77px;height:16px;background:#737478"></div>
<div class="a" style="left:691px;top:994px;width:122px;height:14px;background:#7c7d81;border:1px solid #4a4a4c"></div>
<svg style="left:692px;top:995px" width="120" height="12" viewBox="0 0 120 12"><path d="M0 0C12 6,22 12,32 12L0 12ZM42 12C60 12,66 0,84 0L94 0C104 0,112 8,120 12Z" fill="#343437"/></svg>
<div class="a" style="left:751px;top:993px;width:5px;height:16px;background:#6b6c70"></div>
<svg style="left:612px;top:993px" width="290" height="15" viewBox="612 993 290 15">
<circle cx="626" cy="999" r="4.500" fill="#f4f4f4" stroke="#222"/><path d="M623.500 999h5" stroke="#222" stroke-width="1.500"/><path d="M629 1003l4 4" stroke="#222" stroke-width="2"/>
<circle cx="652" cy="999" r="4.500" fill="#f4f4f4" stroke="#222"/><path d="M649.500 999h5M652 996.500v5" stroke="#222" stroke-width="1.500"/><path d="M655 1003l4 4" stroke="#222" stroke-width="2"/>
<rect x="671" y="994" width="13" height="13" fill="#222"/><rect x="673.500" y="996.500" width="8" height="8" fill="#222" stroke="#999"/>
<path d="M824.500 1003c-2-9 10-11 11 0" fill="none" stroke="#222" stroke-width="2.800"/><path d="M820 999.500l4.500 7 5-6z" fill="#222"/>
<path d="M858.500 1003c2-9-10-11-11 0" fill="none" stroke="#222" stroke-width="2.800"/><path d="M863 999.500l-4.500 7-5-6z" fill="#222"/>
<circle cx="878" cy="1000.500" r="5" fill="none" stroke="#2a2a2a" stroke-width="2.500" stroke-dasharray="3 2"/>
</svg>
<div class="a" style="left:892px;top:994px;width:712px;height:14px;background:#6b6c6f"></div>
<div class="a" style="left:893px;top:994px;width:12px;height:13px;background:#7e7f83;border:1px solid #5a5a5a;border-radius:2px"></div>
<div class="a" style="left:1591px;top:994px;width:13px;height:13px;background:#7e7f83;border:1px solid #5a5a5a;border-radius:2px"></div>
<div class="a" style="left:1095px;top:994px;width:304px;height:13px;background:linear-gradient(#8a8b8f,#77787c);border:1px solid #5a5a5a;border-radius:2px"></div>
<svg style="left:892px;top:994px" width="712" height="14" viewBox="892 994 712 14" fill="#333"><path d="M901 997l-4 3.500 4 3.500zM1596 997l4 3.500-4 3.500z"/><path d="M1244 998v6m2-6v6m2-6v6" stroke="#444" fill="none"/></svg>
<div class="a" style="left:1606px;top:994px;width:14px;height:14px;background:#747579;border:1px solid #838488;border-left-color:#66676a;border-top-color:#66676a"></div>
<div class="a" style="left:490px;top:1009px;width:1131px;height:21px;background:#5d5d5d;border-top:1px solid #4a4a4a"></div>
<div class="a" style="left:491px;top:1011px;width:24px;height:17px;background:#747579;border:1px solid #555"></div>
<svg style="left:491px;top:1011px" width="24" height="17" viewBox="0 0 24 17"><path d="M5 9l7-5 7 5M5 14l7-5 7 5" fill="none" stroke="#a8a8aa" stroke-width="2.200"/></svg>
<div class="a" style="left:1621px;top:60px;width:18px;height:970px;background:#5d5d5d"></div>
<div class="dk" style="left:1622px;top:60px;width:17px;height:25px;border-bottom:1px solid #3e3e3e"></div>
<!-- RIGHT DOCK -->
<div class="dk" style="left:1639px;top:60px;width:281px;height:25px;border-bottom:1px solid #3e3e3e"></div>
<div class="pan" style="left:1639px;top:86px;width:281px;height:943px"></div>
<div class="a" style="left:1639px;top:60px;width:1px;height:970px;background:#444"></div>
<!-- navigator -->
<div class="tabbar" style="left:1640px;top:87px;width:280px;height:21px"></div>
<div class="mb" style="left:1640px;top:87px;width:22px;height:21px"></div>
<div class="tab" style="left:1663px;top:88px;width:90px;height:22px"></div>
<div class="tabi" style="left:1754px;top:89px;width:34px;height:19px"></div>
<div class="tabi" style="left:1789px;top:89px;width:34px;height:19px"></div>
<div class="tabi" style="left:1824px;top:89px;width:34px;height:19px"></div>
<svg style="left:1663px;top:88px" width="200" height="22" viewBox="1663 88 200 22">
<rect x="1678" y="99" width="13" height="9" fill="#ddd" stroke="#fff"/><rect x="1675" y="96" width="13" height="9" fill="#999" stroke="#eee"/><rect x="1671.500" y="93.500" width="15" height="11" fill="#fff" stroke="#e01010" stroke-width="2"/>
<rect x="1762" y="91" width="18" height="15" fill="#999a9d"/><path d="M1762 106l6-7 5 4 4-3 3 6z" fill="#b4b5b8"/>
<path d="M1798 106v-7h4c0-6 8-6 8 0h4v7z" fill="#a4a5a8"/><circle cx="1841" cy="99" r="8" fill="#6a6b6e"/><circle cx="1841" cy="94.500" r="2" fill="#b4b5b8"/><rect x="1839.500" y="98" width="3" height="7" fill="#b4b5b8"/>
</svg>
<div class="a" style="left:1640px;top:113.500px;width:280px;height:1.500px;background:#434345"></div>
<div class="a" style="left:1641px;top:115px;width:271px;height:147px;background:#424242"></div>
<div class="a" style="left:1680px;top:115px;width:1px;height:147px;background:#e81010"></div>
<div class="a" style="left:1872px;top:115px;width:1px;height:147px;background:#e81010"></div>
<div class="a" style="left:1706px;top:115px;width:140px;height:147px;background:#dbdbdb;overflow:hidden">
<svg style="left:0;top:0" width="140" height="147" viewBox="640 130 815 856"><use href="#art"/></svg></div>
<div class="a" style="left:1912px;top:115px;width:8px;height:147px;background:repeating-linear-gradient(90deg,#5a5a5c 0 1px,#7b7c80 1px 3px)"></div>
<!-- nav controls -->
<div class="a" style="left:1645px;top:270px;width:134px;height:17px;background:linear-gradient(to bottom right,#7d7e82 49.600%,#343437 50.400%);border:1px solid #3c3c3e"></div>
<div class="a" style="left:1645px;top:295px;width:134px;height:17px;background:#7d7e82;border:1px solid #3c3c3e"></div>
<svg style="left:1646px;top:296px" width="132" height="15" viewBox="0 0 132 15"><path d="M0 0C12 6,22 15,32 15L0 15ZM48 15C68 15,72 0,88 0L102 0C114 0,124 10,132 15Z" fill="#343437"/></svg>
<div class="a" style="left:1711px;top:266px;width:5px;height:25px;background:#696a6e;border:1px solid #5c5d60"></div>
<div class="a" style="left:1710px;top:291px;width:5px;height:25px;background:#696a6e;border:1px solid #5c5d60"></div>
<svg style="left:1785px;top:264px" width="135" height="54" viewBox="1785 264 135 54">
<circle cx="1796" cy="276" r="7.500" fill="#f4f4f4" stroke="#222" stroke-width="1.500"/><path d="M1792 276h8" stroke="#222" stroke-width="2"/><path d="M1801 282l5 6" stroke="#333" stroke-width="3"/>
<circle cx="1820.500" cy="276" r="7.500" fill="#f4f4f4" stroke="#222" stroke-width="1.500"/><path d="M1816.500 276h8M1820.500 272v8" stroke="#222" stroke-width="2"/><path d="M1826 282l5 6" stroke="#333" stroke-width="3"/>
<rect x="1834" y="266" width="24.500" height="24.500" fill="#2a2a2a"/><rect x="1838.500" y="270.500" width="15.500" height="15.500" fill="#2a2a2a" stroke="#6a6a6a" stroke-width="1.500"/>
<rect x="1863.500" y="268.500" width="23.500" height="20" fill="#f4f6f8" stroke="#333"/><rect x="1864" y="266" width="18" height="6" fill="#333"/><path d="M1869 272l14 12m0 0v-6m0 6h-6" stroke="#111" stroke-width="2.500" fill="none"/>
<rect x="1888.500" y="268.500" width="23.500" height="20" fill="#f4f6f8" stroke="#333"/><rect x="1888" y="266" width="24" height="4" fill="#333"/><path d="M1893 273l15 13m-15-13v6m0-6h6m9 13v-6m0 6h-6" stroke="#111" stroke-width="2.500" fill="none"/>
<path d="M1791 310c-3-14 16-18 18-4" fill="none" stroke="#222" stroke-width="3.500"/><path d="M1785 304l7 9 6-9z" fill="#222"/>
<path d="M1827 310c3-14-16-18-18-4" fill="none" stroke="#222" stroke-width="3.500"/><path d="M1833 304l-7 9-6-9z" fill="#222"/>
<circle cx="1846" cy="304" r="8" fill="none" stroke="#68696c" stroke-width="4" stroke-dasharray="4 3"/>
<path d="M1868 300c2-8 12-8 14 0" fill="none" stroke="#222" stroke-width="3"/><path d="M1865 306l7 5-7 5zM1885 306l-7 5 7 5z" fill="#eee" stroke="#222" stroke-width=".8"/><path d="M1875 302v14" stroke="#222" stroke-dasharray="2 2" stroke-width="2"/>
<path d="M1896 312c-8-2-8-12 0-14" fill="none" stroke="#222" stroke-width="3"/><path d="M1903 296l5 7h-10zM1903 316l5-7h-10z" fill="#eee" stroke="#222" stroke-width=".8"/><path d="M1896 306h16" stroke="#222" stroke-dasharray="2 2" stroke-width="2"/>
</svg>
<!-- layer property -->
<div class="a" style="left:1640px;top:317px;width:280px;height:2px;background:#555"></div>
<div class="tabbar" style="left:1640px;top:319px;width:280px;height:20px"></div>
<div class="mb" style="left:1640px;top:319px;width:22px;height:20.500px"></div>
<div class="tab" style="left:1663px;top:320px;width:115px;height:22px"></div>
<div class="tabi" style="left:1779px;top:321px;width:34px;height:19px"></div>
<div class="tabi" style="left:1814px;top:321px;width:34px;height:19px"></div>
<svg style="left:1663px;top:320px" width="200" height="22" viewBox="1663 320 200 22">
<rect x="1670" y="335" width="20" height="4" fill="#111"/><rect x="1671" y="339" width="18" height="2" fill="#ddd"/><path d="M1672 331l5 4c3-6 8-10 14-13-5 4-9 9-13 15z" fill="#e01010"/>
<ellipse cx="1791" cy="331" rx="8" ry="2.500" fill="#a4a5a8"/><ellipse cx="1791" cy="335" rx="8" ry="2.500" fill="#a4a5a8"/><circle cx="1797" cy="336" r="5" fill="#b8b9bc" stroke="#77787c"/>
<path d="M1826 339c-4-4-2-8 2-12v-4h5v4c4 4 6 8 2 12z" fill="#a4a5a8"/></svg>
<div class="a" style="left:1640px;top:345px;width:280px;height:1px;background:#58595c"></div>
<div class="a" style="left:1640px;top:346px;width:260px;height:202px;border:1px solid #5f6063;border-right:none"></div>
<div class="a" style="left:1900px;top:346px;width:15px;height:202px;background:#747579;border-left:1px solid #5c5d60"></div>
<div class="a" style="left:1901px;top:346px;width:13px;height:202px;background:#6b6c6f;border-right:2px solid #87888c;border-bottom:2px solid #87888c;border-left:1px solid #626366"></div>
<div class="a" style="left:1645px;top:358px;width:250px;height:1px;background:#65666a"></div>
<div class="a" style="left:1645px;top:405px;width:250px;height:1px;background:#65666a"></div>
<div class="a" style="left:1650px;top:352px;width:37px;height:14px;background:#7b7c80"></div>
<div class="a" style="left:1650px;top:399px;width:104px;height:14px;background:#7b7c80"></div>
<div class="btn" style="left:1763px;top:368px;width:133px;height:23px"></div>
<svg style="left:1763px;top:368px" width="133" height="23" viewBox="1763 368 133 23">
<circle cx="1776.500" cy="379.500" r="7" fill="#222" stroke="#fff" stroke-width="3"/>
<circle cx="1804" cy="381" r="8" fill="#2f86d8"/><circle cx="1807" cy="378" r="8" fill="none" stroke="#222" stroke-width="1"/>
<rect x="1825" y="370" width="20" height="20" fill="#2a2a2a"/><rect x="1825" y="370" width="20" height="20" fill="url(#chk)"/>
<rect x="1859" y="374" width="14" height="15" fill="#fff"/><rect x="1854" y="370" width="15" height="15" fill="#58b8f8"/>
<path d="M1879 376h12l-6 7z" fill="#2e2e2e"/></svg>
<div class="btn" style="left:1660px;top:418px;width:171px;height:24px"></div>
<div class="a" style="left:1709px;top:420px;width:7px;height:21px;background:#f87878"></div>
<div class="a" style="left:1716px;top:420px;width:7px;height:21px;background:#78b8f8"></div>
<div class="a" style="left:1723px;top:420px;width:8px;height:21px;background:#78e878"></div>
<svg style="left:1814px;top:425px" width="14" height="10" viewBox="0 0 14 10"><path d="M1 2h12l-6 7z" fill="#2e2e2e"/></svg>
<!-- LAYER PANEL -->
<div class="a" style="left:1640px;top:549px;width:280px;height:2px;background:#555"></div>
<div class="tabbar" style="left:1640px;top:552px;width:280px;height:20px"></div>
<div class="mb" style="left:1640px;top:552px;width:22px;height:20px"></div>
<div class="tab" style="left:1663px;top:552px;width:66px;height:22px"></div>
<div class="tabi" style="left:1730px;top:553px;width:76px;height:19px"></div>
<div class="tabi" style="left:1807px;top:553px;width:101px;height:19px"></div>
<svg style="left:1663px;top:552px" width="200" height="22" viewBox="1663 552 200 22">
<g fill="#f4f4f4" stroke="#222" stroke-width=".8"><path d="M1671 568l9-3 9 3-9 3z"/><path d="M1671 564l9-3 9 3-9 3z"/><path d="M1671 560l9-3 9 3-9 3z"/></g>
<rect x="1736" y="555" width="20" height="16" fill="#6a6b6e"/><path d="M1740 566a4 4 0 1 1 6 0M1748 560a4 4 0 1 1-3 7" fill="none" stroke="#2a2a2a" stroke-width="2.200"/>
<path d="M1814 561l18-4v12h-18z" fill="#5c5d60"/><path d="M1814 561l18-4" stroke="#3a3a3a" stroke-width="3" stroke-dasharray="3 2"/></svg>
<div class="a" style="left:1640px;top:575px;width:280px;height:2px;background:#68696c"></div>
<div class="btn" style="left:1642px;top:579px;width:135px;height:23px"></div>
<svg style="left:1761px;top:585px" width="12" height="10" viewBox="0 0 12 10"><path d="M0 2h11l-5.500 6z" fill="#2e2e2e"/></svg>
<div class="a" style="left:1785px;top:584px;width:83px;height:11px;background:repeating-conic-gradient(#d8d8d8 0 25%,#fff 0 50%) 0 0/10px 10px;border:1px solid #555"></div>
<div class="a" style="left:1786px;top:585px;width:81px;height:9px;background:linear-gradient(90deg,rgba(200,200,200,0),rgba(190,190,190,.9))"></div>
<div class="a" style="left:1868px;top:578px;width:4px;height:25px;background:#636468;border:1px solid #58595c"></div>
<svg style="left:1901px;top:581px" width="12" height="20" viewBox="0 0 12 20" fill="#2e2e2e"><path d="M1 8l5-6 5 6zM1 12l5 6 5-6z"/></svg>
<!-- row 2 -->
<div class="btn" style="left:1641px;top:604px;width:44px;height:25px"></div>
<div class="a" style="left:1645px;top:607px;width:23px;height:20px;border:2px solid #222;background:#7b7c80"></div>
<svg style="left:1670px;top:612px" width="12" height="10" viewBox="0 0 12 10"><path d="M0 2h11l-5.500 6z" fill="#2e2e2e"/></svg>
<div class="btn" style="left:1834px;top:605px;width:38px;height:23px;border-color:#6c6d70;background:#7b7c80"></div>
<div class="btn" style="left:1875px;top:605px;width:38px;height:23px;border-color:#6c6d70;background:#7b7c80"></div>
<svg style="left:1700px;top:603px" width="215" height="56" viewBox="1700 603 215 56">
<ellipse cx="1720.500" cy="611" rx="12" ry="5" fill="none" stroke="#333" stroke-dasharray="2 2"/><path d="M1708.500 617c0 10 24 10 24 0" fill="#8a8a8a" stroke="#333"/><ellipse cx="1720.500" cy="617" rx="12" ry="4.500" fill="#2a2a2a" stroke="#333"/>
<path d="M1742 627l2-17h3l2 17z" fill="#ccc" stroke="#333" stroke-width=".8"/><rect x="1743" y="606" width="5" height="5" fill="#eee" stroke="#333" stroke-width=".8"/><path d="M1742 608l-6-3v8zM1749 608l6-3v8z" fill="#a8a9ac"/>
<path d="M1766 606l4-2 4 2v14l-4 7-4-7z" fill="#18a8d8"/><path d="M1766 615l4-2 4 2-4 12z" fill="#f0c818"/><path d="M1769 623l1 4 1-4z" fill="#18a8d8"/>
<rect x="1788" y="613" width="15" height="13" fill="#555" stroke="#222"/><path d="M1790.500 613v-3c0-6 10-6 10 0v3" fill="none" stroke="#444" stroke-width="2.500"/><rect x="1794.500" y="617" width="2" height="5" fill="#eee"/>
<rect x="1811" y="611" width="11" height="9" fill="#eee" stroke="#333"/><path d="M1813 611v-2c0-5 7-5 7 0v2" fill="none" stroke="#eee" stroke-width="2"/><rect x="1816" y="613" width="1.500" height="4" fill="#222"/><rect x="1820" y="617" width="10" height="10" fill="#fff"/><rect x="1820" y="622" width="5" height="5" fill="#aaa"/><rect x="1825" y="617" width="5" height="5" fill="#aaa"/>
<rect x="1840" y="607" width="14" height="13" fill="#88898c"/><path d="M1852 622l6 6m0-6l-6 6" stroke="#6a6b6e" stroke-width="2"/><path d="M1859 614h9l-4.500 5z" fill="#6a6b6e"/>
<path d="M1880 626l18-19M1881 609h8l-8 8z" fill="none" stroke="#6a6b6e" stroke-width="1.500"/><path d="M1893 622l6 6m0-6l-6 6" stroke="#6a6b6e" stroke-width="2"/><path d="M1900 614h9l-4.500 5z" fill="#6a6b6e"/>
<g fill="#f4f4f4" stroke="#222" stroke-width=".8"><path d="M1643 649l10-3 10 3-10 3z"/><path d="M1643 644l10-3 10 3-10 3z"/><path d="M1643 639l10-3 10 3-10 3z"/></g>
<path d="M1718 633h20v16l-7 7h-13z" fill="#f6f8fc" stroke="#444"/><path d="M1731 656v-7h7z" fill="#333"/>
<path d="M1743 636h16v18h-16z" fill="#eef2f6" stroke="#555"/><rect x="1755" y="647" width="8" height="8" fill="#ddd" stroke="#555"/>
<path d="M1766 636h8l2 3h10v14h-20z" fill="#a8a9ab" stroke="#666"/><path d="M1779 642h11v14h-11z" fill="#f4f6f8" stroke="#555"/>
<path d="M1793 643l9-5 9 5-9 5z" fill="#8a8b8e"/><path d="M1793 650l9-4 9 4-9 5z" fill="#6e6f72"/><path d="M1800 640h4v6h3l-5 5-5-5h3z" fill="#6a6b6e"/>
<path d="M1818 640l9-5 9 5-9 4z" fill="#222"/><path d="M1818 650l9-4 9 4-9 5z" fill="#f4f4f4" stroke="#222"/><path d="M1825 640h4v6h3l-5 6-5-6h3z" fill="#111" stroke="#eee" stroke-width=".6"/>
<rect x="1841" y="637" width="23" height="16" fill="#555" stroke="#222"/><circle cx="1852" cy="645" r="5" fill="#fff"/>
<path d="M1870 636v18l3 4 3-4v-18z" fill="#707174"/><path d="M1873 643l10-5 8 5-9 5zM1876 652l8-4 8 4-8 4z" fill="#8a8b8e"/>
<g transform="translate(-0.500 -1.500)"><path d="M1894.500 643h17l-2.500 14h-12z" fill="#f0f0f0" stroke="#333"/><ellipse cx="1903" cy="641.500" rx="10" ry="3.500" fill="#fafafa" stroke="#333"/><path d="M1898 639.500c0-6.500 10-6.500 10 0" fill="none" stroke="#e8f0f4" stroke-width="2"/><path d="M1899 646v9m4-9v9m4-9v9" stroke="#bbb"/></g>
</svg>
<div class="a" style="left:1641px;top:630px;width:272px;height:1px;background:#65666a"></div>
<!-- layer list -->
<div class="a" style="left:1640px;top:659px;width:274px;height:1px;background:#4c4c4e"></div>
<div class="a" style="left:1642px;top:660px;width:3px;height:367px;border-left:1px solid #555;border-right:1px solid #555"></div>
<div class="a sel" style="left:1692px;top:743px;width:207px;height:40px;border:1px solid #4e6676"></div>
<div class="a" style="left:1645px;top:700px;width:254px;height:1px;background:#4e4e50"></div>
<div class="a" style="left:1645px;top:741px;width:254px;height:1px;background:#4e4e50"></div>
<div class="a" style="left:1645px;top:783px;width:254px;height:1px;background:#4e4e50"></div>
<div class="a" style="left:1645px;top:824px;width:254px;height:1px;background:#4e4e50"></div>
<div class="a" style="left:1668px;top:660px;width:1px;height:164px;background:#4e4e50"></div>
<div class="a" style="left:1690px;top:660px;width:1px;height:164px;background:#4e4e50"></div>
<div class="a th" style="top:664px"></div>
<div class="a th" style="top:705px"></div>
<div class="a th" style="top:746px;box-shadow:0 0 0 1px #7f9aac,0 0 0 2px #111"></div>
<div class="a" style="left:1697px;top:787px;width:32px;height:34px;background:#dbdbdb;border:1px solid #111"></div>
<style>.th{left:1697px;width:32px;height:34px;border:1px solid #111;background:repeating-conic-gradient(#d4d4d4 0 25%,#fff 0 50%) 0 0/8px 8px}</style>
<svg class="a" style="left:1699px;top:748px" width="28" height="30" viewBox="640 130 815 856"><use href="#art"/></svg>
<svg class="a" style="left:1699px;top:707px;opacity:.3;filter:grayscale(1)" width="28" height="30" viewBox="640 130 815 856"><use href="#art"/></svg>
<svg style="left:1715px;top:666px" width="12" height="14" viewBox="0 0 12 14"><path d="M2 10c2-6 6-9 9-8-1 4-3 8-8 10z" fill="#58c878"/><circle cx="4" cy="9" r="2" fill="#e83030"/><path d="M7 3l2 5" stroke="#d8c818" stroke-width="1.500"/></svg>
<style>.ly{left:1732px;font-size:13px;color:#ececec}</style>
<div class="a" style="left:1735px;top:786px;width:25px;height:25px;background:#fff;border:1px solid #111"></div>
<svg style="left:1735px;top:786px" width="25" height="25" viewBox="0 0 25 25"><path d="M5 3h10l6 6v14h-16z" fill="#fff" stroke="#555"/><path d="M15 3v6h6" fill="#ddd" stroke="#555"/></svg>
<svg style="left:1645px;top:660px" width="46" height="165" viewBox="1645 660 46 165">
<g id="eye"><path d="M1649 722c4-6 11-6 15 0-4 5-11 5-15 0z" fill="#eee" stroke="#222"/><circle cx="1656.500" cy="722" r="3" fill="#111"/><path d="M1649 720c4-6 11-6 15 0" fill="none" stroke="#222" stroke-width="1.500"/></g>
<use href="#eye" y="41"/><use href="#eye" y="82"/>
<path d="M1677 738l2-14h3l2 14z" fill="#ccc" stroke="#333" stroke-width=".8"/><rect x="1678" y="720" width="5" height="5" fill="#eee" stroke="#333" stroke-width=".8"/><path d="M1677 722l-6-3v8zM1684 722l6-3v8z" fill="#a4a5a8"/>
<path d="M1673 770l10-9 2 2-8 8z" fill="#eee" stroke="#222" stroke-width=".8"/><path d="M1682 762l5-6 1 4-3 4z" fill="#111"/>
</svg>
<div class="a" style="left:1900px;top:660px;width:15px;height:367px;background:#747579;border-left:1px solid #5c5d60"></div>
<div class="a" style="left:1901px;top:660px;width:13px;height:367px;background:#6b6c6f;border-right:2px solid #87888c;border-bottom:2px solid #87888c;border-left:1px solid #626366"></div>
<div class="a" style="left:1915px;top:346px;width:2px;height:681px;background:#5a5a5c"></div>
<div class="a" style="left:1640px;top:1027px;width:280px;height:2px;background:#5a5a5c"></div>
<!-- TASKBAR -->
<div class="a" style="left:0;top:1030px;width:1920px;height:50px;background:linear-gradient(90deg,#343434 0,#363636 26%,#3a3a3a 34%,#3e3e3e 45%,#383838 52%,#2e2e2e 59%,#3b3b3b 65%,#2b2b2b 72%,#363636 79%,#383838 88%,#303030 100%);border-top:1px solid #262626"></div>
<div class="a" style="left:0;top:1030px;width:60px;height:50px;background:#2f2f2f"></div>
<div class="a" style="left:60px;top:1031px;width:429px;height:49px;background:#3d3d3d;border:1px solid #474747"></div>
<svg style="left:20px;top:1045px" width="20" height="20" viewBox="0 0 23 23" fill="#fff"><path d="M0 3.200l9.400-1.300v9h-9.400zM10.500 1.700l12.500-1.700v10.900h-12.500zM0 12h9.400v9l-9.400-1.300zM10.500 12h12.500v11l-12.500-1.700z"/></svg>
<svg style="left:74px;top:1042px" width="26" height="26" viewBox="0 0 26 26"><circle cx="15" cy="10" r="6.500" fill="none" stroke="#f0f0f0" stroke-width="1.600"/><path d="M10.500 14.500l-8 8" stroke="#f0f0f0" stroke-width="1.600"/></svg>
<svg style="left:500px;top:1031px" width="440" height="49" viewBox="500 1031 440 49">
<rect x="800" y="1031" width="61" height="49" fill="#6c6c6c"/>
<g fill="#a858cc"><rect x="619" y="1077" width="51" height="3"/><rect x="681" y="1077" width="51" height="3"/><rect x="800" y="1077" width="61" height="3"/><rect x="867" y="1077" width="43" height="3"/></g>
<circle cx="520" cy="1054.500" r="8.500" fill="none" stroke="#fff" stroke-width="2.600"/>
<g fill="none" stroke="#fff" stroke-width="1.500"><rect x="571" y="1049" width="13" height="10"/><path d="M570 1045v3m0 12v3M585 1045v3m0 12v3M589.500 1045v3m0 4v6m0 3v2"/></g>
<path d="M636 1043h16a4 4 0 0 1 4 4v20l-5-4h-15a4 4 0 0 1-4-4v-12a4 4 0 0 1 4-4z" fill="#7289da"/><path d="M637 1050c4-2 10-2 14 0 2 3 2 7 2 9-3 2-5 2-6 2l-1-2h-4l-1 2c-1 0-3 0-6-2 0-2 0-6 2-9z" fill="#fff"/><circle cx="641" cy="1055" r="1.600" fill="#7289da"/><circle cx="647" cy="1055" r="1.600" fill="#7289da"/>
<circle cx="706" cy="1054" r="13" fill="#dd4b3e"/><path d="M706 1054l-11.500 6a13 13 0 0 0 11.500 7l6-10z" fill="#1da462"/><path d="M706 1054h13a13 13 0 0 1-7 11.500 l-6 1.500z" fill="#ffce44"/><circle cx="706" cy="1054" r="6" fill="#fff"/><circle cx="706" cy="1054" r="4.800" fill="#4a8af4"/><circle cx="712" cy="1062" r="6.500" fill="#3a2a3a"/><circle cx="712" cy="1062" r="3.500" fill="#c8a0c0"/>
<path d="M754 1046h10l2 3h16v17h-28z" fill="#f0b030"/><rect x="754" y="1051" width="28" height="15" fill="#f8d060"/><path d="M759 1066v-8h18v8h-4v-5h-10v5z" fill="#2a8ad8"/>
<rect x="816" y="1041" width="27" height="27" fill="#f4f4f4"/><path d="M836 1048c-8-4-15 0-13 4 2 4 12 3 12-1 0-3-6-2-7 1-1 4 1 8 3 10" fill="none" stroke="#111" stroke-width="2.800" stroke-linecap="round"/>
<circle cx="891.500" cy="1054.500" r="13" fill="#f4f4f8"/><circle cx="891.500" cy="1054.500" r="11" fill="#e84898"/><path d="M879 1058a12.500 12.500 0 0 0 25 0 12.500 12.500 0 0 1-25 0z" fill="#8858e8" opacity=".6"/><path d="M888 1050l8-2v10a2.200 2.200 0 1 1-1.500-2v-5.500l-5 1.200v8a2.200 2.200 0 1 1-1.500-2z" fill="#fff"/>
</svg>
<svg style="left:1550px;top:1031px" width="370" height="49" viewBox="1550 1031 370 49" fill="none" stroke="#f0f0f0" stroke-width="1.500">
<path d="M1558 1059l7-7 7 7"/>
<path d="M1588 1059h13a4 4 0 0 0 0-8 6 6 0 0 0-11-1 4.500 4.500 0 0 0-2 9z" fill="#f0f0f0" stroke="none"/>
<rect x="1620" y="1045" width="8" height="13" rx="3" fill="#f0f0f0" stroke="none"/><path d="M1618 1058c2 4 10 4 12 0M1624 1061v4m-3 0h6"/>
<rect x="1648" y="1050" width="15" height="9" fill="#f0f0f0" stroke="none"/><path d="M1645 1053h3m-3 3h3M1664 1053v3"/>
<path d="M1678 1063a12 12 0 0 1 12-12M1682 1063a8 8 0 0 1 8-8M1686 1063a4 4 0 0 1 4-4" /><circle cx="1690.500" cy="1062.500" r="1.200" fill="#f0f0f0"/>
<path d="M1706 1052h3l4-4v14l-4-4h-3z"/><path d="M1716 1051c2 2 2 6 0 8M1719 1048c4 4 4 10 0 14" stroke="#bbb"/>
<path d="M1744 1064c-4-3 2-9 6-11l5-6 3 2-4 7c-2 4-5 7-10 8zM1752 1056c5-2 8 1 8 3"/>
<path d="M1869 1046h21v15h-12v6l-6-6h-3z" fill="#f0f0f0" stroke="none"/><path d="M1873 1050h13m-13 3h13m-13 3h13" stroke="#373737" stroke-width="1"/>
<circle cx="1888" cy="1063.500" r="8" fill="#373737" stroke="#d0d0d0" stroke-width="1.200"/>
<path d="M1914.500 1031v49" stroke="#555" stroke-width="1"/>
</svg>
<!-- MISC ICONS -->
<svg style="left:0;top:0" width="1920" height="115" viewBox="0 0 1920 115">
<!-- window buttons -->
<g><circle cx="1862" cy="15" r="9.500" fill="#2c2c2c" stroke="#6a6a6a"/><circle cx="1886" cy="15" r="9.500" fill="#2c2c2c" stroke="#6a6a6a"/><circle cx="1909" cy="15" r="9.500" fill="#2c2c2c" stroke="#6a6a6a"/>
<path d="M1856 18h12" stroke="#e8e8e8" stroke-width="2.500"/><rect x="1881" y="10" width="10" height="10" fill="none" stroke="#e8e8e8" stroke-width="2"/><path d="M1881 11h10" stroke="#e8e8e8" stroke-width="3"/><path d="M1905 11l8 8m0-8l-8 8" stroke="#e8e8e8" stroke-width="2.600"/></g>
<!-- collapse arrows -->
<g fill="#9c9d9f">
<path d="M8 65l-5 7.500 5 7.500h3l-4-7.500 4-7.500zM15 65l-5 7.500 5 7.500h3l-4-7.500 4-7.500z"/>
<path d="M58 65l-5 7.500 5 7.500h3l-4-7.500 4-7.500zM65 65l-5 7.500 5 7.500h3l-4-7.500 4-7.500z"/>
<path d="M91 65l-5 7.500 5 7.500h2l-3.500-7.500 3.500-7.500z"/>
<path d="M1630 65l-5 7.500 5 7.500h3l-4-7.500 4-7.500zM1636 65l-5 7.500 5 7.500h3l-4-7.500 4-7.500z"/>
<path d="M1877 65l5 7.500-5 7.500h-2l3.500-7.500-3.500-7.500z"/>
<path d="M1906 65l5 7.500-5 7.500h-3l4-7.500-4-7.500zM1913 65l5 7.500-5 7.500h-3l4-7.500-4-7.500z"/>
</g>
<g stroke="#3a3a3a" stroke-width="1"><path d="M36.500 68v9m2-9v9m2-9v9m2-9v9m2-9v9" /><path d="M478.500 68v9m2-9v9m2-9v9m2-9v9"/><path d="M1643.500 68v9m2-9v9m2-9v9m2-9v9"/></g>
<g stroke="#6d6e70" stroke-width="1"><path d="M37.500 68v9m2-9v9m2-9v9m2-9v9" /><path d="M479.500 68v9m2-9v9m2-9v9m2-9v9"/><path d="M1644.500 68v9m2-9v9m2-9v9m2-9v9"/></g>
<!-- tab menu icons -->
<use href="#mbi" x="7" y="94"/><use href="#mbi" x="57" y="94"/><use href="#mbi" x="1645" y="94"/>
<!-- pen nib icons in tabs -->
<g id="nib"><path d="M40 90c-4.500 7-4.500 13-1 18h2c3.500-5 3.500-11-1-18z" fill="#d0d0d0" stroke="#222" stroke-width=".9"/><path d="M40 94c-1 4-1 8 0 11" stroke="#222" stroke-width="1.200" fill="none"/><path d="M40 91c-1.500 3-2.500 6-2.500 8" stroke="#fff" stroke-width=".9" fill="none"/><path d="M35.500 112l1.500-4h6l1.500 4z" fill="#111"/></g>
<use href="#nib" x="44" y="0"/>
<path d="M88 100h5m0-7v14m0-14h3m-3 7h3m-3 7h3" fill="none" stroke="#222" stroke-width=".9"/><g fill="#a8a9ac" stroke="#444" stroke-width=".7"><rect x="96.500" y="91" width="4" height="4"/><rect x="96.500" y="98" width="4" height="4"/><rect x="96.500" y="105" width="4" height="4"/></g>
</svg>
<svg style="left:52px;top:570px" width="60" height="260" viewBox="52 570 60 260">
<use href="#mbi" x="57" y="578"/><use href="#mbi" x="57" y="813"/>
<use href="#nib" x="44" y="484"/><circle cx="94.800" cy="580.800" r="5.300" fill="none" stroke="#1e1e1e" stroke-width="2.400" stroke-dasharray="2.080 2.080"/><circle cx="94.800" cy="580.800" r="3.200" fill="none" stroke="#1e1e1e" stroke-width="2.600"/>
</svg>
<svg style="left:1640px;top:320px" width="30" height="250" viewBox="1640 320 30 250"><use href="#mbi" x="1645" y="326"/><use href="#mbi" x="1645" y="558"/></svg>
<!-- color wheel tab icons -->
<div class="a" style="left:82px;top:810px;width:18px;height:18px;border-radius:50%;background:conic-gradient(#f03020,#f0e020 16%,#20d020 33%,#20d0e0 50%,#2030e0 66%,#e020d0 83%,#f03020);border-bottom:1.500px solid #eee"></div>
<div class="a" style="left:87px;top:815px;width:8px;height:8px;border-radius:50%;background:#6a6b6e"></div>
<div class="a" style="left:186px;top:811px;width:18px;height:3px;background:linear-gradient(90deg,#5a5a5c,#8a8b8e)"></div><div class="a" style="left:186px;top:816px;width:18px;height:3px;background:linear-gradient(90deg,#8a8b8e,#5a5a5c)"></div><div class="a" style="left:186px;top:821px;width:18px;height:3px;background:linear-gradient(90deg,#5a5a5c,#8a8b8e)"></div>
<div class="a" style="left:287px;top:810px;width:18px;height:16px;background:repeating-conic-gradient(#5e5f62 0 25%,#8a8b8e 0 50%) 0 0/9px 8px"></div>
<!-- pen / pencil icons on group buttons -->
<svg style="left:55px;top:118px" width="220" height="28" viewBox="55 118 220 28">
<path d="M62 122l6-2 3 6-6 3z" fill="#777" stroke="#333" stroke-width=".8"/><path d="M65 129l6-3 6 12 0 7-6-5z" fill="#f4f4f4" stroke="#222" stroke-width=".9"/><path d="M72 134l4 9" stroke="#222" stroke-width=".8"/>
<path d="M250 123l6-3 4 6-6 4z" fill="#888" stroke="#444" stroke-width=".8"/><path d="M254 130l6-4 5 10-1 8-6-5z" fill="#f4f4f4" stroke="#666" stroke-width=".9"/><path d="M263 140l1 4-3-2z" fill="#222"/>
</svg>
<!-- TOOL COLUMN ICONS -->
<svg style="left:2px;top:113px" width="47" height="640" viewBox="2 113 47 640">
<path d="M15 124l8-3 9 2v11l-8 4-9-3z" fill="#f4f4f4" stroke="#555" stroke-width=".8"/><path d="M24 127v11m0-11l8-4m-8 4l-9-3" stroke="#999" fill="none" stroke-width=".8"/><path d="M29 132l7 9-3 0 2 4-2 1-2-4-2 2z" fill="#222" stroke="#fff" stroke-width=".8"/>
<path d="M15 154l13 6-5 1 3 6-2 1-3-6-3 4z" fill="#666" stroke="#4a4a4a" stroke-width=".6"/><path d="M27 160v18m-3-3l3 4 3-4m-3-15M18 170h18m-3-3l4 3-4 3m-12-6l-4 3 4 3" fill="none" stroke="#4e4e50" stroke-width="1.600"/>
<rect x="14.500" y="189.500" width="21" height="16" fill="none" stroke="#4a4a4c" stroke-dasharray="3 2" stroke-width="1.200"/>
<path d="M24 221v16m-8-8h16m-13-6l10 12m0-12l-10 12" stroke="#555" stroke-width="1"/><circle cx="24" cy="229" r="3" fill="#fff"/><path d="M26 231l8 9" stroke="#eee" stroke-width="2"/><path d="M26 231l8 9" stroke="#555" stroke-width=".6"/>
<circle cx="29" cy="256" r="2.500" fill="#444"/><path d="M28 258l-5 9-3 7 5-6 5-9z" fill="#ccc" stroke="#333" stroke-width=".8"/>
<path d="M19 290l6-2 3 6-6 3z" fill="#777" stroke="#333" stroke-width=".8"/><path d="M22 297l6-3 6 12 0 6-6-4z" fill="#f4f4f4" stroke="#222" stroke-width=".9"/><path d="M29 301l4 9" stroke="#222" stroke-width=".8"/>
<path d="M33 322l-9 11" stroke="#555" stroke-width="3.500"/><path d="M33 322l-9 11" stroke="#999" stroke-width="1.500"/><ellipse cx="21" cy="337" rx="5" ry="4" fill="#e8f0f8" stroke="#888" stroke-width=".6"/><path d="M18 340c4 3 10 3 16 2-5 0-9-2-12-4z" fill="#b8d8f0"/>
<rect x="18" y="364" width="12" height="11" rx="2" fill="#f0f0f0" stroke="#444" stroke-width=".8"/><path d="M18 369h12" stroke="#444"/><rect x="21" y="358" width="6" height="6" fill="#ddd" stroke="#444" stroke-width=".8"/><path d="M28 360l9-6v12z" fill="#9a9b9e" stroke="#555" stroke-width=".5"/>
<path d="M15 399l9-9 9 9-9 9z" fill="none" stroke="#5a5a5c" stroke-width="1.200"/><path d="M19.500 394.500l9 9m-9 0l9-9m-4.500-4.500l-9 9m18 0l-9 9m0-18l9 9m-18 0l9 9" stroke="#5a5a5c" stroke-width="1"/>
<path d="M20 424l12 2-3 12-12-2z" fill="#f4f4f4" stroke="#666" stroke-width=".8"/><path d="M17 436l12 2 1 4-12-1z" fill="#c8c8c8" stroke="#666" stroke-width=".8"/>
<path d="M22 455c-4 6-7 10-5 14 2 3 7 3 8 0 2 3 7 3 9 0 2-4-1-8-5-14l-3.500 5z" fill="#f0f0f0"/><path d="M22 455c-4 6-7 10-5 14 2 3 7 3 8 0l0-9z" fill="#555"/>
<path d="M22 494l13 7-8 12-12-7z" fill="#f4f4f4" stroke="#222" stroke-width=".8"/><path d="M16 504c-5 0-6 5-4 8 1-4 4-5 7-4z" fill="#222"/><path d="M24 497l7-7 3 2-6 8z" fill="#ddd" stroke="#222" stroke-width=".8"/>
<rect x="14.500" y="522.500" width="21" height="21" fill="#333" stroke="#555"/><path d="M15 523h20v20z" fill="#d8d8d8"/><rect x="14.500" y="522.500" width="21" height="21" fill="url(#gr)" stroke="#555"/>
<ellipse cx="25" cy="566.500" rx="9" ry="5.500" fill="none" stroke="#3a3a3c" stroke-width="1.200"/>
<path d="M18 593h18v4l-18 3zM18 605l18-4v6h-18z" fill="#f4f4f4" stroke="#aaa" stroke-width=".5"/>
<path d="M17 625v15h18z" fill="#58b8f0" stroke="#2a88c8" stroke-width=".8"/><path d="M21 633v4h5z" fill="#7b7c80"/>
<text x="25" y="675" font-family="Liberation Serif,serif" font-size="30" text-anchor="middle" fill="#3a3a3c">A</text>
<ellipse cx="26" cy="696" rx="11" ry="8.500" fill="#fff" stroke="#bbb" stroke-width=".6"/><path d="M28 703l4 5-8-3z" fill="#fff" stroke="#bbb" stroke-width=".6"/>
<path d="M19 723v19M19 723h16" stroke="#4a4a4c" stroke-width="1.200"/><circle cx="19" cy="723" r="1.800" fill="#eee"/><path d="M24 728l10 5-5 1-1 5z" fill="#fff" stroke="#444" stroke-width=".7"/>
</svg>
<svg width="0" height="0" style="position:absolute"><defs><linearGradient id="gr" x1="0" y1="0" x2="1" y2="1"><stop offset="0" stop-color="#f4f4f4"/><stop offset=".5" stop-color="#888"/><stop offset="1" stop-color="#111"/></linearGradient></defs></svg>
<!-- TEXT -->
<div class="t" style="left:740.0px;top:8.3px;font-size:15px;color:#d6d6d6;letter-spacing:-0.33px;white-space:pre;">mockmaid (1500 x 1570px 600dpi 54.3%)  - CLIP STUDIO PAINT EX</div>
<div class="t" style="left:15.0px;top:37.1px;font-size:15px;color:#f2f2f2;letter-spacing:-0.37px;">File</div>
<div class="t" style="left:60.0px;top:37.1px;font-size:15px;color:#f2f2f2;letter-spacing:0.04px;">Edit</div>
<div class="t" style="left:107.3px;top:37.1px;font-size:15px;color:#f2f2f2;letter-spacing:-0.50px;">Story(P)</div>
<div class="t" style="left:182.0px;top:37.1px;font-size:15px;color:#f2f2f2;letter-spacing:0.40px;">Animation</div>
<div class="t" style="left:274.0px;top:37.1px;font-size:15px;color:#f2f2f2;letter-spacing:-0.45px;">Layer</div>
<div class="t" style="left:332.3px;top:37.1px;font-size:15px;color:#f2f2f2;letter-spacing:-0.11px;">Selection area</div>
<div class="t" style="left:449.0px;top:37.1px;font-size:15px;color:#f2f2f2;letter-spacing:-0.06px;">View</div>
<div class="t" style="left:503.3px;top:37.1px;font-size:15px;color:#f2f2f2;letter-spacing:-0.11px;">Filter</div>
<div class="t" style="left:558.3px;top:37.1px;font-size:15px;color:#f2f2f2;letter-spacing:0.39px;">Window</div>
<div class="t" style="left:636.0px;top:37.1px;font-size:15px;color:#f2f2f2;letter-spacing:0.21px;">Help</div>
<div class="t" style="left:106.7px;top:93.4px;font-size:12.5px;color:#e8e8e8;letter-spacing:-0.44px;">Sub Tool [Pen]</div>
<div class="t" style="left:85.3px;top:124.6px;font-size:14px;color:#e8e8e8;letter-spacing:-0.51px;">Pen</div>
<div class="t" style="left:273.6px;top:124.6px;font-size:14px;color:#e8e8e8;letter-spacing:-0.36px;">Pencils</div>
<div class="t" style="left:221.4px;top:177.9px;font-size:13.5px;color:#e8e8e8;letter-spacing:-0.29px;">G-pen</div>
<div class="t" style="left:398.2px;top:177.9px;font-size:13.5px;color:#e8e8e8;letter-spacing:-0.11px;">Real G-Pen</div>
<div class="t" style="left:179.4px;top:223.0px;font-size:13.5px;color:#e8e8e8;">Mapping pen</div>
<div class="t" style="left:405.4px;top:223.0px;font-size:13.5px;color:#e8e8e8;letter-spacing:-0.18px;">Turnip pen</div>
<div class="t" style="left:179.4px;top:267.8px;font-size:13.5px;color:#e8e8e8;letter-spacing:-0.23px;">For effect line</div>
<div class="t" style="left:390.3px;top:267.8px;font-size:13.5px;color:#e8e8e8;letter-spacing:-0.06px;">Textured pen</div>
<div class="t" style="left:153.8px;top:312.1px;font-size:13px;color:#e8e8e8;letter-spacing:-0.13px;font-weight:300;">ガサ伽サ線画ペン</div>
<div class="t" style="left:107.6px;top:577.9px;font-size:12.5px;color:#e8e8e8;letter-spacing:-0.15px;">Tool property [Mapping pen]</div>
<div class="t" style="left:53.2px;top:602.0px;font-size:13.5px;color:#f2f2f2;letter-spacing:0.09px;">Mapping pen</div>
<div class="t" style="left:71.0px;top:653.7px;font-size:13.5px;color:#e8e8e8;letter-spacing:-0.29px;">Brush Size</div>
<div class="t" style="left:71.0px;top:688.0px;font-size:13.5px;color:#e8e8e8;letter-spacing:-0.01px;">Opacity</div>
<div class="t" style="left:71.0px;top:727.8px;font-size:13.5px;color:#e8e8e8;letter-spacing:-0.08px;">Anti-aliasing</div>
<div class="t" style="left:71.0px;top:755.4px;font-size:13.5px;color:#e8e8e8;letter-spacing:-0.10px;">Stabilization</div>
<div class="t" style="left:409.0px;top:660.9px;font-size:13px;color:#e8e8e8;letter-spacing:-0.33px;">22.8</div>
<div class="t" style="left:412.5px;top:694.6px;font-size:13px;color:#e8e8e8;letter-spacing:-0.40px;">100</div>
<div class="t" style="left:426.2px;top:762.2px;font-size:13px;color:#e8e8e8;letter-spacing:-0.43px;">6</div>
<div class="t" style="left:106.9px;top:812.6px;font-size:12.5px;color:#e8e8e8;letter-spacing:-0.34px;">Color Wheel</div>
<div class="t" style="left:212.1px;top:812.6px;font-size:12.5px;color:#9b9c9f;letter-spacing:-0.33px;">Color Slider</div>
<div class="t" style="left:312.8px;top:812.6px;font-size:12.5px;color:#9b9c9f;letter-spacing:-0.41px;">Color Set</div>
<div class="t" style="left:345.0px;top:1011.3px;font-size:12.5px;color:#e8e8e8;letter-spacing:-0.05px;">240</div>
<div class="t" style="left:389.9px;top:1011.3px;font-size:12.5px;color:#e8e8e8;letter-spacing:0.15px;">30</div>
<div class="t" style="left:429.6px;top:1011.3px;font-size:12.5px;color:#e8e8e8;letter-spacing:-0.25px;">91</div>
<div class="t" style="left:332.6px;top:1012.9px;font-size:9px;color:#fff;letter-spacing:0.50px;font-weight:bold;">H</div>
<div class="t" style="left:373.0px;top:1012.9px;font-size:9px;color:#fff;letter-spacing:0.48px;font-weight:bold;">S</div>
<div class="t" style="left:413.0px;top:1012.9px;font-size:9px;color:#fff;letter-spacing:0.48px;font-weight:bold;">V</div>
<div class="t" style="left:110.0px;top:1047.0px;font-size:17px;color:#e6e6e6;letter-spacing:0.72px;">Type here to search</div>
<div class="t" style="left:495.3px;top:99.8px;font-size:13.5px;color:#f0f0f0;letter-spacing:-0.23px;">mockmaid</div>
<div class="t" style="left:1168.5px;top:69.1px;font-size:13px;color:#fff;letter-spacing:-0.45px;font-weight:bold;">?</div>
<div class="t" style="left:492.7px;top:995.2px;font-size:12px;color:#e0e0e0;letter-spacing:0.21px;">54.3</div>
<div class="t" style="left:696.0px;top:995.2px;font-size:12px;color:#e0e0e0;letter-spacing:-0.03px;">0.0</div>
<div class="t" style="left:1696.2px;top:93.9px;font-size:12.5px;color:#e8e8e8;letter-spacing:-0.18px;">Navigator</div>
<div class="t" style="left:1646.0px;top:272.6px;font-size:13px;color:#e4e4e4;letter-spacing:-0.38px;">54.3</div>
<div class="t" style="left:1649.4px;top:297.6px;font-size:13px;color:#e4e4e4;letter-spacing:-0.56px;">0.0</div>
<div class="t" style="left:1696.4px;top:326.2px;font-size:12.5px;color:#e8e8e8;letter-spacing:-0.46px;">Layer Property</div>
<div class="t" style="left:1652.4px;top:352.0px;font-size:13.5px;color:#e8e8e8;letter-spacing:-0.20px;">Effect</div>
<div class="t" style="left:1652.4px;top:399.0px;font-size:13.5px;color:#e8e8e8;letter-spacing:-0.01px;">Expression color</div>
<div class="t" style="left:1736.2px;top:423.5px;font-size:14px;color:#e8e8e8;letter-spacing:-0.31px;">Color</div>
<div class="t" style="left:1696.4px;top:558.1px;font-size:12.5px;color:#e8e8e8;letter-spacing:-0.82px;">Layer</div>
<div class="t" style="left:1763.6px;top:558.1px;font-size:12.5px;color:#9b9c9f;letter-spacing:-0.36px;">History</div>
<div class="t" style="left:1840.8px;top:558.1px;font-size:12.5px;color:#9b9c9f;letter-spacing:-0.14px;">Auto Action</div>
<div class="t" style="left:1679.1px;top:583.2px;font-size:14px;color:#e8e8e8;letter-spacing:-0.24px;">Normal</div>
<div class="t" style="left:1877.7px;top:583.5px;font-size:13.5px;color:#e8e8e8;letter-spacing:-0.94px;">100</div>
<div class="t" style="left:1732.5px;top:665.6px;font-size:13px;color:#ececec;letter-spacing:-0.07px;">100 % Normal</div>
<div class="t" style="left:1732.5px;top:683.9px;font-size:13px;color:#ececec;letter-spacing:0.10px;">Layer 1 Copy</div>
<div class="t" style="left:1732.5px;top:706.6px;font-size:13px;color:#ececec;letter-spacing:-0.07px;">100 % Normal</div>
<div class="t" style="left:1732.5px;top:724.6px;font-size:13px;color:#ececec;letter-spacing:0.03px;">lines</div>
<div class="t" style="left:1732.5px;top:747.8px;font-size:13px;color:#ececec;letter-spacing:-0.07px;">100 % Normal</div>
<div class="t" style="left:1732.5px;top:765.6px;font-size:13px;color:#ececec;letter-spacing:0.37px;">base</div>
<div class="t" style="left:1762.5px;top:807.2px;font-size:13px;color:#ececec;letter-spacing:0.28px;">Paper</div>
<div class="t" style="left:1781.3px;top:1036.6px;font-size:14.5px;color:#f0f0f0;letter-spacing:0.12px;">11:29 AM</div>
<div class="t" style="left:1778.2px;top:1059.2px;font-size:14.5px;color:#f0f0f0;letter-spacing:0.32px;">6/15/2019</div>
<div class="t" style="left:1885.2px;top:1059.1px;font-size:11px;color:#f0f0f0;letter-spacing:-0.03px;font-weight:bold;">3</div>
</div></body></html>
